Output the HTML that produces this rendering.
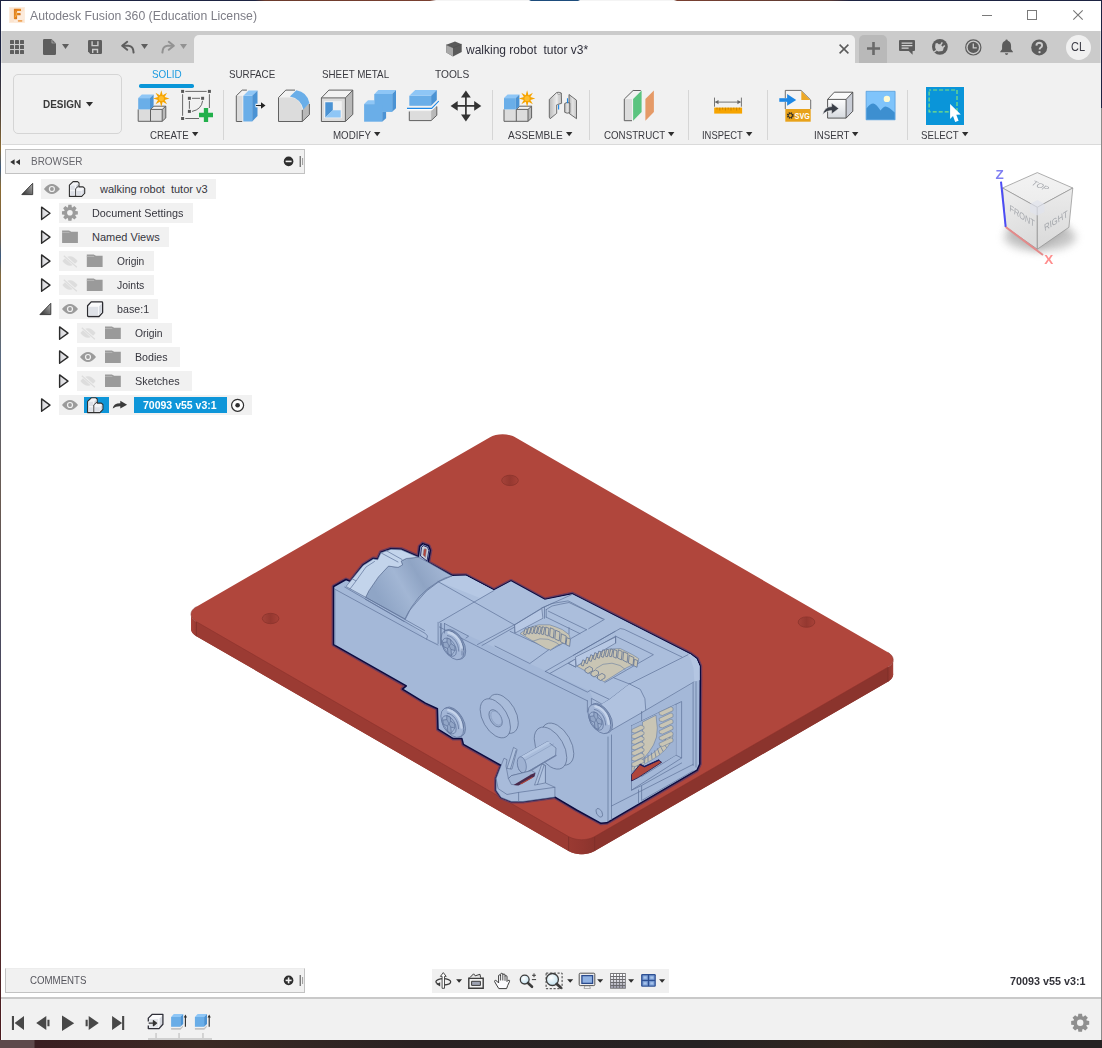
<!DOCTYPE html>
<html><head><meta charset="utf-8"><title>Autodesk Fusion 360</title>
<style>
*{box-sizing:border-box;margin:0;padding:0}
html,body{width:1102px;height:1048px;overflow:hidden;background:#fff;font-family:"Liberation Sans",sans-serif;}
#root{position:relative;width:1102px;height:1048px;background:#fff;overflow:hidden}
.a{position:absolute}
.t{position:absolute;white-space:pre;transform-origin:0 0}
svg{position:absolute;overflow:visible}

</style></head><body>
<div id="root">
<div class="a" style="left:0px;top:0px;width:1102px;height:1048px;background:#1d2342;"></div>
<div class="a" style="left:0px;top:60px;width:1px;height:980px;background:linear-gradient(#1d2342 0,#5a4a3a 6%,#8a6a32 9%,#3c5a80 11%,#8a6a32 13%,#7a6040 18%,#3a5a82 20%,#84683a 22%,#5a6a80 30%,#6a5a50 45%,#4a4a60 60%,#5a3a38 80%,#4a1a1e 100%);"></div>
<div class="a" style="left:1101px;top:108px;width:1px;height:932px;background:#8b8b8b;"></div>
<div class="a" style="left:0px;top:0px;width:1102px;height:1px;background:linear-gradient(90deg,#1d2342 0,#1d2342 255px,#6a3a2c 265px,#7a4030 430px,#f4f4f4 436px,#f4f4f4 529px,#1d4c7c 531px,#1d4c7c 578px,#f4f4f4 580px,#f4f4f4 674px,#7a4030 677px,#5a3a34 830px,#1d2342 850px,#1d2342 100%);"></div>
<div class="a" style="left:1px;top:1px;width:1100px;height:1039px;background:#fff;"></div>
<div class="a" style="left:0px;top:1040px;width:1102px;height:8px;background:linear-gradient(90deg,#5e4a4c 0,#5e4a4c 34px,#3a1f22 35px,#3b2a24 200px,#2a2122 420px,#262223 700px,#33261f 860px,#262223 1000px,#262223 100%);"></div>
<div class="a" style="left:1px;top:31px;width:1099px;height:32px;background:#cbcbcb;"></div>
<div class="a" style="left:1100px;top:31px;width:1px;height:32px;background:#dedede;"></div>
<div class="a" style="left:194px;top:35px;width:661px;height:28px;background:#f1f1f1;border-radius:5px 5px 0 0"></div>
<div class="a" style="left:859px;top:35px;width:28px;height:28px;background:#b9b9b9;border-radius:5px 5px 0 0"></div>
<div class="a" style="left:1px;top:63px;width:1100px;height:81px;background:#f1f1f1;"></div>
<div class="a" style="left:1px;top:144px;width:1100px;height:1px;background:#dadada;"></div>
<div class="a" style="left:13px;top:74px;width:109px;height:60px;background:#f1f1f1;border:1px solid #d5d5d5;border-radius:5px"></div>
<div class="a" style="left:139.3px;top:84.1px;width:54.4px;height:3.5px;background:#0a96d8;border-radius:1.75px"></div>
<svg style="left:192.4px;top:132px" width="7" height="5"><path d="M0 0h6.4L3.2 4.2z" fill="#2e2e2e"/></svg>
<svg style="left:374px;top:132px" width="7" height="5"><path d="M0 0h6.4L3.2 4.2z" fill="#2e2e2e"/></svg>
<svg style="left:566px;top:132px" width="7" height="5"><path d="M0 0h6.4L3.2 4.2z" fill="#2e2e2e"/></svg>
<svg style="left:668px;top:132px" width="7" height="5"><path d="M0 0h6.4L3.2 4.2z" fill="#2e2e2e"/></svg>
<svg style="left:746px;top:132px" width="7" height="5"><path d="M0 0h6.4L3.2 4.2z" fill="#2e2e2e"/></svg>
<svg style="left:852px;top:132px" width="7" height="5"><path d="M0 0h6.4L3.2 4.2z" fill="#2e2e2e"/></svg>
<svg style="left:962px;top:132px" width="7" height="5"><path d="M0 0h6.4L3.2 4.2z" fill="#2e2e2e"/></svg>
<svg style="left:86px;top:102px" width="8" height="5"><path d="M0 0h7L3.5 4.4z" fill="#2e2e2e"/></svg>
<div class="a" style="left:223px;top:90px;width:1px;height:50px;background:#d6d6d6;"></div>
<div class="a" style="left:492px;top:90px;width:1px;height:50px;background:#d6d6d6;"></div>
<div class="a" style="left:589px;top:90px;width:1px;height:50px;background:#d6d6d6;"></div>
<div class="a" style="left:688px;top:90px;width:1px;height:50px;background:#d6d6d6;"></div>
<div class="a" style="left:767px;top:90px;width:1px;height:50px;background:#d6d6d6;"></div>
<div class="a" style="left:907px;top:90px;width:1px;height:50px;background:#d6d6d6;"></div>
<div class="a" style="left:5px;top:149px;width:300px;height:25px;background:#f1f1f1;border:1px solid #c2c2c2"></div>
<div class="a" style="left:41px;top:179px;width:175px;height:20px;background:#f1f1f1;"></div>
<div class="a" style="left:59px;top:203px;width:134px;height:20px;background:#f1f1f1;"></div>
<div class="a" style="left:59px;top:227px;width:110px;height:20px;background:#f1f1f1;"></div>
<div class="a" style="left:59px;top:251px;width:95px;height:20px;background:#f1f1f1;"></div>
<div class="a" style="left:59px;top:275px;width:95px;height:20px;background:#f1f1f1;"></div>
<div class="a" style="left:59px;top:299px;width:99px;height:20px;background:#f1f1f1;"></div>
<div class="a" style="left:77px;top:323px;width:95px;height:20px;background:#f1f1f1;"></div>
<div class="a" style="left:77px;top:347px;width:103px;height:20px;background:#f1f1f1;"></div>
<div class="a" style="left:77px;top:371px;width:115px;height:20px;background:#f1f1f1;"></div>
<div class="a" style="left:59px;top:395px;width:193px;height:20px;background:#f1f1f1;"></div>
<div class="a" style="left:84px;top:397px;width:25px;height:16px;background:#0e96d9;"></div>
<div class="a" style="left:134px;top:397px;width:93px;height:16px;background:#0e96d9;"></div>
<div class="a" style="left:5px;top:968px;width:300px;height:25px;background:#f1f1f1;border:1px solid #c2c2c2;border-top-color:#ececec"></div>
<div class="a" style="left:432px;top:969px;width:237px;height:24px;background:#f0f0f0;"></div>
<div class="a" style="left:1px;top:997px;width:1100px;height:2px;background:#c9c9c9;"></div>
<div class="a" style="left:1px;top:999px;width:1100px;height:41px;background:#f1f1f1;"></div>
<div class="a" style="left:1px;top:31px;width:1px;height:32px;background:#dcdcdc;"></div>
<div class="a" style="left:1px;top:63px;width:1px;height:82px;background:#f8f8f8;"></div>
<div class="a" style="left:1px;top:999px;width:1px;height:41px;background:#fafafa;"></div>
<svg style="left:9px;top:7px" width="16" height="16"><defs><linearGradient id="fg" x1="0" y1="0" x2="1" y2="1"><stop offset="0" stop-color="#d9771c"/><stop offset="0.45" stop-color="#e88a24"/><stop offset="1" stop-color="#b4520c"/></linearGradient></defs><rect width="16" height="16" fill="#fdeee0"/><rect x="0.8" y="0.8" width="14.4" height="14.4" fill="#fbe4cf"/><path d="M5 9.5L15 4V12L8 16H5Z" fill="#fcebdc"/><path d="M4.9 2Q4.9 1.7 5.4 1.7H11.6Q12 1.7 12 2.2V3.4Q12 3.9 11.6 3.9H8.1V6.1H11.2Q11.6 6.1 11.6 6.5V7.9Q11.6 8.3 11.2 8.3H8.1V11.6Q8.1 12.3 7.4 12.3H5.6Q4.9 12.3 4.9 11.6Z" fill="url(#fg)"/><path d="M6.6 4.6Q7.6 5.2 7.4 7.4Q7 9 6.4 10" stroke="#f8b550" stroke-width="1" fill="none" opacity="0.85"/><rect x="8.9" y="13" width="4.3" height="1.8" rx="0.4" fill="#f0a55a"/></svg>
<svg style="left:982px;top:15px" width="10" height="1"><rect width="10" height="1" fill="#7a7a7a"/></svg>
<svg style="left:1027px;top:10px" width="10" height="10"><rect x="0.5" y="0.5" width="9" height="9" fill="none" stroke="#7a7a7a"/></svg>
<svg style="left:1073px;top:10px" width="10" height="10"><path d="M0.3 0.3L9.7 9.7M9.7 0.3L0.3 9.7" stroke="#777" stroke-width="1.1" fill="none"/></svg>
<svg style="left:10px;top:40px" width="14" height="14"><rect x="0" y="0" width="4" height="4" rx="0.6" fill="#5e5e5e"/><rect x="0" y="5" width="4" height="4" rx="0.6" fill="#5e5e5e"/><rect x="0" y="10" width="4" height="4" rx="0.6" fill="#5e5e5e"/><rect x="5" y="0" width="4" height="4" rx="0.6" fill="#5e5e5e"/><rect x="5" y="5" width="4" height="4" rx="0.6" fill="#5e5e5e"/><rect x="5" y="10" width="4" height="4" rx="0.6" fill="#5e5e5e"/><rect x="10" y="0" width="4" height="4" rx="0.6" fill="#5e5e5e"/><rect x="10" y="5" width="4" height="4" rx="0.6" fill="#5e5e5e"/><rect x="10" y="10" width="4" height="4" rx="0.6" fill="#5e5e5e"/></svg>
<svg style="left:43px;top:39px" width="13" height="16"><path d="M1.2 0H8.5L13 4.5V14.8Q13 16 11.8 16H1.2Q0 16 0 14.8V1.2Q0 0 1.2 0Z" fill="#5e5e5e"/><path d="M8.7 0.6V4.3H12.4Z" fill="#cbcbcb"/><path d="M9.3 0.9L12.2 3.8H9.3Z" fill="#5e5e5e"/></svg>
<svg style="left:62px;top:44px" width="7" height="5"><path d="M0 0H7L3.5 5Z" fill="#5e5e5e"/></svg>
<svg style="left:88px;top:40px" width="14" height="14"><path d="M1.2 0H12.8Q14 0 14 1.2V12.8Q14 14 12.8 14H2.4L0 11.6V1.2Q0 0 1.2 0Z" fill="#5e5e5e"/><path d="M3.4 1.2V6.3H10.6V1.2H9.2V4.9H4.8V1.2Z" fill="#cbcbcb"/><path d="M4 13V8.8H10.2V13H8.8V10.2H5.4V13Z" fill="#cbcbcb"/></svg>
<svg style="left:121px;top:41px" width="14" height="13"><path d="M6.2 0.8L1.2 4.8L6.2 8.8" fill="none" stroke="#5e5e5e" stroke-width="2" stroke-linejoin="round" stroke-linecap="round"/><path d="M1.8 4.8H7.5Q12.4 5.2 12.6 11.6" fill="none" stroke="#5e5e5e" stroke-width="2" stroke-linecap="round"/></svg>
<svg style="left:141px;top:44px" width="7" height="5"><path d="M0 0H7L3.5 5Z" fill="#5e5e5e"/></svg>
<svg style="left:161px;top:41px" width="14" height="13"><path d="M7.8 0.8L12.8 4.8L7.8 8.8" fill="none" stroke="#929292" stroke-width="2" stroke-linejoin="round" stroke-linecap="round"/><path d="M12.2 4.8H6.5Q1.6 5.2 1.4 11.6" fill="none" stroke="#929292" stroke-width="2" stroke-linecap="round"/></svg>
<svg style="left:180px;top:44px" width="7" height="5"><path d="M0 0H7L3.5 5Z" fill="#929292"/></svg>
<svg style="left:446px;top:41px" width="16" height="16"><path d="M0.3 3.8L9 0.6L15.7 3.2V11L7 15.6L0.3 11.6Z" fill="#5a5a5a"/><path d="M0.3 3.8L7 6.8V15.6L0.3 11.6Z" fill="#a9a9a9"/><path d="M0.3 3.8L7 6.8L15.7 3.2" fill="none" stroke="#4a4a4a" stroke-width="0.5"/></svg>
<svg style="left:839px;top:44px" width="10" height="10"><path d="M0.6 0.6L9.4 9.4M9.4 0.6L0.6 9.4" stroke="#5a5a5a" stroke-width="1.5" fill="none"/></svg>
<svg style="left:867px;top:42px" width="13" height="13"><path d="M6.5 0V13M0 6.5H13" stroke="#6a6a6a" stroke-width="2.6" fill="none"/></svg>
<svg style="left:899px;top:40px" width="18" height="15"><path d="M1 0H15Q16 0 16 1V10Q16 11 15 11H13.6V14.8L9.8 11H1Q0 11 0 10V1Q0 0 1 0Z" fill="#5c5c5c"/><path d="M2.6 3H13.4M2.6 5.5H13.4M2.6 8H9.6" stroke="#d4d4d4" stroke-width="1.25"/></svg>
<svg style="left:931px;top:38px" width="18" height="18"><g transform="translate(8.9 8.8)"><circle r="7.9" fill="#5c5c5c"/><path d="M-4.4 -3.2L-2.6 -3.8L-1.2 -2.6L0.2 -2.6L3.6 0.6V2.2L2.6 4.2L-1.6 4.6L-3.8 3.4L-4.8 0.4Z" fill="#cbcbcb"/><path d="M0.5 -1.5L2.4 -4.4M3 0.8L4.9 -1.4" stroke="#cbcbcb" stroke-width="1.5" fill="none"/><path d="M-3.4 3.4L-7.2 6.2" stroke="#cbcbcb" stroke-width="1.3" fill="none"/></g></svg>
<svg style="left:965px;top:39px" width="17" height="17"><circle cx="8.3" cy="8.4" r="7.6" fill="none" stroke="#5c5c5c" stroke-width="1.2"/><circle cx="8.3" cy="8.4" r="5.6" fill="#5c5c5c"/><path d="M8.3 4.6V8.8H11.8" fill="none" stroke="#cbcbcb" stroke-width="1.3"/></svg>
<svg style="left:999.6px;top:38.6px" width="15" height="18"><g transform="scale(0.9 0.93)"><path d="M7.3 0.6Q8.6 0.6 8.7 2Q12.2 3.2 12.3 7.5V11L14.4 13.6V14.2H0.2V13.6L2.3 11V7.5Q2.4 3.2 5.9 2Q6 0.6 7.3 0.6Z" fill="#5c5c5c"/><path d="M5.4 15.4H9.2Q8.9 17.2 7.3 17.2Q5.7 17.2 5.4 15.4Z" fill="#5c5c5c"/></g></svg>
<svg style="left:1031px;top:39px" width="17" height="17"><circle cx="8.2" cy="8.4" r="8" fill="#5c5c5c"/><path d="M5.4 6.6Q5.5 3.8 8.3 3.8Q11.1 3.9 11.1 6.4Q11.1 7.9 9.6 8.7Q8.6 9.3 8.6 10.6" fill="none" stroke="#cbcbcb" stroke-width="1.9"/><circle cx="8.5" cy="13.1" r="1.2" fill="#cbcbcb"/></svg>
<div class="a" style="left:1065.5px;top:34.5px;width:25px;height:25px;border-radius:50%;background:#f0f0f0"></div>
<svg style="left:0;top:0" width="1102" height="145" viewBox="0 0 1102 145"><path d="M138.2 109.4H162.2V121.3H138.2Z" fill="#dcdcdc" /><path d="M150.5 109.4L154.0 106.2H165.79999999999998L162.2 109.4Z" fill="#f2f2f2" /><path d="M162.2 109.4L165.79999999999998 106.2V118L162.2 121.3Z" fill="#b9b9b9" /><path d="M138.2 109.4V121.3H162.2L165.79999999999998 118V106.2H154.0L150.5 109.4M150.5 109.4V121.3M150.5 109.4H162.2V121.3M162.2 109.4L165.79999999999998 106.2" fill="none" stroke="#616161" stroke-width="1" /><path d="M138.2 98.1H150.0V109.4H138.2Z" fill="#6aaee8" /><path d="M138.2 98.1L141.79999999999998 94.4H153.6L150.0 98.1Z" fill="#8ec6f6" /><path d="M150.0 98.1L153.6 94.4V106.2L150.0 109.4Z" fill="#4b93d4" /><path d="M161.3 90.3L162.7 95.2L167.1 92.7L164.6 97.1L169.5 98.5L164.6 99.9L167.1 104.3L162.7 101.8L161.3 106.7L159.9 101.8L155.5 104.3L158.0 99.9L153.1 98.5L158.0 97.1L155.5 92.7L159.9 95.2Z" fill="#f6a400" /><circle cx="161.29999999999998" cy="98.5" r="2.6" fill="#ffbe2e"/><path d="M161.3 90.3L162.7 95.2L167.1 92.7L164.6 97.1L169.5 98.5L164.6 99.9L167.1 104.3L162.7 101.8L161.3 106.7L159.9 101.8L155.5 104.3L158.0 99.9L153.1 98.5L158.0 97.1L155.5 92.7L159.9 95.2Z" fill="none" stroke="#f1f1f1" stroke-width="0.6" opacity="0.0"/><path d="M504 109.4H528V121.3H504Z" fill="#dcdcdc" /><path d="M516.3 109.4L519.8 106.2H531.6L528 109.4Z" fill="#f2f2f2" /><path d="M528 109.4L531.6 106.2V118L528 121.3Z" fill="#b9b9b9" /><path d="M504 109.4V121.3H528L531.6 118V106.2H519.8L516.3 109.4M516.3 109.4V121.3M516.3 109.4H528V121.3M528 109.4L531.6 106.2" fill="none" stroke="#616161" stroke-width="1" /><path d="M504 98.1H515.8V109.4H504Z" fill="#6aaee8" /><path d="M504 98.1L507.6 94.4H519.4L515.8 98.1Z" fill="#8ec6f6" /><path d="M515.8 98.1L519.4 94.4V106.2L515.8 109.4Z" fill="#4b93d4" /><path d="M527.1 90.3L528.5 95.2L532.9 92.7L530.4 97.1L535.3 98.5L530.4 99.9L532.9 104.3L528.5 101.8L527.1 106.7L525.7 101.8L521.3 104.3L523.8 99.9L518.9 98.5L523.8 97.1L521.3 92.7L525.7 95.2Z" fill="#f6a400" /><circle cx="527.1" cy="98.5" r="2.6" fill="#ffbe2e"/><path d="M527.1 90.3L528.5 95.2L532.9 92.7L530.4 97.1L535.3 98.5L530.4 99.9L532.9 104.3L528.5 101.8L527.1 106.7L525.7 101.8L521.3 104.3L523.8 99.9L518.9 98.5L523.8 97.1L521.3 92.7L525.7 95.2Z" fill="none" stroke="#f1f1f1" stroke-width="0.6" opacity="0.0"/><rect x="181.1" y="89.9" width="3" height="3" fill="#585858"/><rect x="207.9" y="89.9" width="3" height="3" fill="#585858"/><rect x="181.1" y="117.0" width="3" height="3" fill="#585858"/><rect x="187.9" y="96.8" width="3" height="3" fill="#585858"/><rect x="201.1" y="96.8" width="3" height="3" fill="#585858"/><rect x="187.9" y="109.9" width="3" height="3" fill="#585858"/><path d="M185.3 91.4H206.7M182.6 94.2V115.8M185.3 118.5H199M209.4 94.2V108" fill="none" stroke="#585858" stroke-width="0.9" /><path d="M192 98.3H200M189.4 101V108.8M202.6 100.8Q201.5 109.5 192 111.4" fill="none" stroke="#585858" stroke-width="0.9" /><path d="M206 108V122M199 115H213" fill="none" stroke="#22b04b" stroke-width="4.3" /><path d="M236.3 95.8L242.2 90.1H246.9L243 95.8Z" fill="#f2f2f2" /><path d="M236.3 95.8H242.5V121.5H236.3Z" fill="#dcdcdc" /><path d="M242.2 121.5H236.3V95.8L242.2 90.1H246.9" fill="none" stroke="#616161" stroke-width="1" /><path d="M243.3 95.8H252.2V121.5H243.3Z" fill="#6aaee8" /><path d="M243.3 95.8L248.6 90.5H257.5L252.2 95.8Z" fill="#8ec6f6" /><path d="M252.2 95.8L257.5 90.5V115.9L252.2 121.5Z" fill="#4b93d4" /><path d="M255.5 103.7H258V107.3H255.5Z" fill="#fff" /><path d="M256 105.5H262" fill="none" stroke="#222" stroke-width="1.1" /><path d="M261 102.3L265.5 105.5L261 108.7Z" fill="#222" /><path d="M278.5 97.6L285.8 90.1H296.4L289.9 97.6Z" fill="#f2f2f2" /><path d="M278.5 97.6H291.7Q300.5 99 302.3 109.4V121.5H278.5Z" fill="#dcdcdc" /><path d="M302.3 109.4L309.4 102.9V114.7L302.3 121.5Z" fill="#b9b9b9" /><path d="M289.9 96.4L296.4 90.3Q307 92 309.4 102.9L303.3 109.6Q301 98.5 289.9 96.4Z" fill="#6aaee8" /><path d="M285.8 90.1H295M278.5 97.6L285.8 90.1M278.5 97.6V121.5H302.3L309.4 114.7V104M302.3 121.5V110" fill="none" stroke="#616161" stroke-width="1" /><path d="M321.4 97.9L328.9 90.1H352.8L345.4 97.9Z" fill="#f2f2f2" /><path d="M345.4 97.9L352.8 90.1V114.4L345.4 121.5Z" fill="#b9b9b9" /><path d="M321.4 97.9H345.4V121.5H321.4Z" fill="#dcdcdc" /><path d="M324.1 101.1H341.8V118.2H324.1Z" fill="#f1f1f1" /><path d="M325.3 102.3H332.8V110.2L325.3 117.6Z" fill="#4b93d4" /><path d="M325.3 117.6L332.8 110.2H340.7V117.6Z" fill="#8ec6f6" /><path d="M321.4 97.9L328.9 90.1H352.8V114.4L345.4 121.5H321.4ZM321.4 97.9H345.4V121.5M345.4 97.9L352.8 90.1" fill="none" stroke="#616161" stroke-width="1" /><path d="M374.5 94H392.2V111.7H374.5Z" fill="#6aaee8" /><path d="M374.5 94L378.3 90.1H396L392.2 94Z" fill="#8ec6f6" /><path d="M392.2 94L396 90.1V108.2L392.2 111.7Z" fill="#4b93d4" /><path d="M364.1 104.1H382.2V121.7H364.1Z" fill="#6aaee8" /><path d="M364.1 104.1L368 100.3H374.5V104.1Z" fill="#8ec6f6" /><path d="M382.2 111.7H386.1V118.2L382.2 121.7Z" fill="#4b93d4" /><path d="M374.5 104.1H382.2V111.7H392.2V94H374.5Z" fill="#6aaee8" /><path d="M409.3 95.8H431.1V105.8H409.3Z" fill="#6aaee8" /><path d="M409.3 95.8L415.2 90.1H436.8L431.1 95.8Z" fill="#8ec6f6" /><path d="M431.1 95.8L436.8 90.1V99.9L431.1 105.8Z" fill="#4b93d4" /><path d="M409.3 111.1H431.1V120.6H409.3Z" fill="#dcdcdc" /><path d="M431.1 111.1L436.8 105.8V115.3L431.1 120.6Z" fill="#b9b9b9" /><path d="M409.3 111.5V120.6H431.1L436.8 115.3V106.5" fill="none" stroke="#616161" stroke-width="1" /><path d="M407 109.5H431.9L438.9 102.2" fill="none" stroke="#fff" stroke-width="1.2" /><path d="M407 108.4H431.7L438.8 101.1" fill="none" stroke="#1e88e5" stroke-width="1.1" /><path d="M465.9 95V117M455 105.9H477" fill="none" stroke="#333" stroke-width="1.7" /><path d="M465.9 90.5L470.8 97.6H461Z" fill="#333" /><path d="M465.9 121.5L470.8 114.4H461Z" fill="#333" /><path d="M450.6 105.9L457.7 101V110.8Z" fill="#333" /><path d="M481.3 105.9L474.2 101V110.8Z" fill="#333" /><linearGradient id="jg" x1="0" x2="1"><stop offset="0" stop-color="#b8b8b8"/><stop offset="0.5" stop-color="#e4e4e4"/><stop offset="1" stop-color="#c4c4c4"/></linearGradient><path d="M549.3 99.4L556.7 92.5Q559 91.8 561.3 93L561.6 103.3L556.7 104.8V113.3L550.2 118.7L549.3 117.2Z" fill="url(#jg)" stroke="#616161" stroke-width="0.9" /><path d="M556.9 93.2V104.5" fill="none" stroke="#f4f4f4" stroke-width="1" /><ellipse cx="558.9" cy="93.4" rx="1.7" ry="0.9" fill="#f4f4f4" stroke="#616161" stroke-width="0.5"/><path d="M569 94.5L576.5 100.2V118.7L569 113.3Z" fill="url(#jg)" stroke="#616161" stroke-width="0.9" /><path d="M564.7 103.5Q567 101.5 569.8 103V112.5Q567 114 564.7 112.3Z" fill="url(#jg)" stroke="#616161" stroke-width="0.9" /><path d="M558.6 104.8V109.5M567.5 98.2V103.3" fill="none" stroke="#1e88e5" stroke-width="1.1" /><path d="M624.3 99.1H632V120.7H624.3Z" fill="#dcdcdc" /><path d="M624.3 99.1L633.1 90.5H640.8L632 99.1Z" fill="#f2f2f2" /><path d="M632 120.7H624.3V99.1L633.1 90.5H640.8" fill="none" stroke="#616161" stroke-width="1" /><path d="M633.1 99.1L641.6 90.5V112.1L633.1 120.7Z" fill="#5bc47f" /><path d="M645.4 99.1L653.9 90.5V112.1L645.4 120.7Z" fill="#e59a67" /><path d="M714.5 97.6V106.7M741.4 97.6V106.7M715.5 102.1H740.4" fill="none" stroke="#666" stroke-width="0.9" /><path d="M714.9 102.1L718.5 100V104.2ZM741 102.1L737.4 100V104.2Z" fill="#666" /><path d="M714.2 107.6H742.1V113.6H714.2Z" fill="#f6a400" /><path d="M717 107.6V109.5M719.8 107.6V110.5M722.6 107.6V109.5M725.4 107.6V110.5M728.2 107.6V109.5M731 107.6V110.5M733.8 107.6V109.5M736.6 107.6V110.5M739.4 107.6V109.5" fill="none" stroke="#b87700" stroke-width="0.7" /><path d="M785.3 109V90.4H801L810.7 100V109" fill="#f4f4f4" stroke="#616161" stroke-width="0.9" /><path d="M801.3 90.9L810.3 100H801.3Z" fill="#eda826" /><path d="M785.3 109H810.7V121.7H785.3Z" fill="#e8a21a" /><path d="M778.5 103.5V96.5H782.5V98.2H787.5V101.8H782.5V103.5Z" fill="#f1f1f1" /><path d="M779.3 98.2H788V101.8H779.3Z" fill="#1e88e5" /><path d="M787.1 94L796.2 100L787.1 105.8Z" fill="#1e88e5" /><circle cx="790.3" cy="115.5" r="2.6" fill="none" stroke="#2a2a2a" stroke-width="1.5" stroke-dasharray="1.3 0.75"/><circle cx="790.3" cy="115.5" r="2" fill="none" stroke="#2a2a2a" stroke-width="0.8"/><text x="794.6" y="119.3" font-family="Liberation Sans" font-weight="bold" font-size="9.2" fill="#fff" textLength="15.2" lengthAdjust="spacingAndGlyphs">SVG</text><linearGradient id="dg" x1="0" y1="0" x2="0" y2="1"><stop offset="0" stop-color="#fdfdfd"/><stop offset="1" stop-color="#d6dadf"/></linearGradient><path d="M827.6 99.4H846.1V118.1H827.6Z" fill="url(#dg)" /><path d="M827.6 99.4L834.3 92.2H852.8L846.1 99.4Z" fill="#fafafa" /><path d="M846.1 99.4L852.8 92.2V111.2L846.1 118.1Z" fill="#c9cdd6" /><path d="M827.6 99.4L834.3 92.2H852.8V111.2L846.1 118.1H827.6ZM827.6 99.4H846.1V118.1M846.1 99.4L852.8 92.2" fill="none" stroke="#484848" stroke-width="0.9" /><path d="M822.6 114.6Q824.5 106.8 831.6 106.6V103.1L838.8 108.5L831.6 113.9V110.6Q826.5 110.4 822.6 114.6Z" fill="#3a3f48" stroke="#f1f1f1" stroke-width="0.5" /><path d="M866.1 91.3H895.1V119.8H866.1Z" fill="#7fc4fb" stroke="#4a97d8" stroke-width="0.7" /><path d="M866.5 108.5Q870 103.5 873.2 103.5Q876 103.5 880.5 110.5Q883.5 106.5 885.5 106.5Q888.5 106.5 894.7 112.5V119.4H866.5Z" fill="#3d8fd0" /><circle cx="886.9" cy="98.9" r="3.2" fill="#fffbd2"/><path d="M925.5 86.5H964.5V125.5H925.5Z" fill="#fbf3ee" /><path d="M926 87H964V125H926Z" fill="#0a95d9" /><path d="M929.1 90H957V111.8H929.1Z" fill="none" stroke="#7fe27f" stroke-width="1.2" stroke-dasharray="4 2" stroke-dashoffset="2"/><path d="M950.1 104.1V118.9L953 116L955.2 121.9L958.6 120.7L956.3 114.8L960.8 114.6Z" fill="#fff" /></svg>
<svg style="left:0;top:0" width="320" height="1000" viewBox="0 0 320 1000"><linearGradient id="tg" x1="0" y1="1" x2="1" y2="0"><stop offset="0" stop-color="#2e2e2e"/><stop offset="0.45" stop-color="#6a6a6a"/><stop offset="1" stop-color="#b4b4b4"/></linearGradient><linearGradient id="tg2" x1="0" x2="1"><stop offset="0" stop-color="#d4d4d8"/><stop offset="1" stop-color="#f4f4f6"/></linearGradient><path d="M10.2 162.1L14.6 159.3V164.9ZM15.6 162.1L20 159.3V164.9Z" fill="#333" /><circle cx="288.6" cy="161.4" r="4.8" fill="#2c2c2c"/><rect x="285.6" y="160.6" width="6" height="1.6" fill="#f1f1f1"/><path d="M300.2 156V167" fill="none" stroke="#444" stroke-width="1" /><path d="M302.6 158V165" fill="none" stroke="#9a9a9a" stroke-width="1" /><circle cx="288.6" cy="980.4" r="4.8" fill="#2c2c2c"/><rect x="285.6" y="979.6" width="6" height="1.6" fill="#f1f1f1"/><rect x="287.8" y="977.4" width="1.6" height="6" fill="#f1f1f1"/><path d="M300.2 975V986" fill="none" stroke="#444" stroke-width="1" /><path d="M302.6 977V984" fill="none" stroke="#9a9a9a" stroke-width="1" /><path d="M21.800000000000004 194.6L32.7 183.29999999999998V194.6Z" fill="url(#tg)" stroke="#333" stroke-width="0.9" stroke-linejoin="round"/><path d="M43.9 189Q47.9 184 51.9 184Q55.9 184 59.9 189Q55.9 194 51.9 194Q47.9 194 43.9 189Z" fill="#9b9b9b" /><circle cx="51.9" cy="189" r="3.1" fill="#f1f1f1"/><circle cx="51.9" cy="189" r="1.9" fill="#9b9b9b"/><path d="M69.4 185.1L73.1 181.6H77.6L79 182.8V186.9H83.1L84.7 188.3V193.2L81.7 196.4H69.4Z" fill="#f4f5f8" stroke="#2f2f2f" stroke-width="1.1" stroke-linejoin="round"/><path d="M70.4 185.6H74.8V189.8H70.4Z" fill="#dde0e7" /><path d="M70.4 191.2H74.6V195.4H70.4Z" fill="#dde0e7" /><path d="M76.7 191H81.6V195.4H76.7Z" fill="#dde0e7" /><path d="M76.2 185.2L78.3 183.4V186.9L76.2 189Z" fill="#d0d4dc" /><path d="M82.4 190.4L84 188.9V192.9L82.4 194.7Z" fill="#d0d4dc" /><path d="M75.6 196V188.7L79 185.6" fill="none" stroke="#2f2f2f" stroke-width="0.9" /><path d="M41.599999999999994 207.1L50.0 213.29999999999998L41.599999999999994 219.5Z" fill="url(#tg2)" stroke="#2c2c2c" stroke-width="1.4" stroke-linejoin="round"/><path d="M77.84 211.19L77.84 214.41L75.48 214.71L75.20 215.39L76.65 217.28L74.38 219.55L72.49 218.10L71.81 218.38L71.51 220.74L68.29 220.74L67.99 218.38L67.31 218.10L65.42 219.55L63.15 217.28L64.60 215.39L64.32 214.71L61.96 214.41L61.96 211.19L64.32 210.89L64.60 210.21L63.15 208.32L65.42 206.05L67.31 207.50L67.99 207.22L68.29 204.86L71.51 204.86L71.81 207.22L72.49 207.50L74.38 206.05L76.65 208.32L75.20 210.21L75.48 210.89Z" fill="#9b9b9b" /><circle cx="69.9" cy="212.8" r="2.8" fill="#f1f1f1"/><path d="M41.599999999999994 230.9L50.0 237.1L41.599999999999994 243.3Z" fill="url(#tg2)" stroke="#2c2c2c" stroke-width="1.4" stroke-linejoin="round"/><path d="M62.1 230.6H69.0L71.3 231.79999999999998H77.9V243.1H62.1Z" fill="#9a9a9a" /><path d="M62.1 232.4H69.5" fill="none" stroke="#bdbdbd" stroke-width="0.8" /><path d="M41.599999999999994 254.9L50.0 261.1L41.599999999999994 267.3Z" fill="url(#tg2)" stroke="#2c2c2c" stroke-width="1.4" stroke-linejoin="round"/><path d="M62.4 261Q66 256.2 70 256.2Q74 256.2 77.6 261Q74 265.8 70 265.8Q66 265.8 62.4 261Z" fill="#dddddd" /><path d="M63.5 255L76.5 267" fill="none" stroke="#f1f1f1" stroke-width="2.6" /><path d="M63.8 255.8L76.8 267.2" fill="none" stroke="#dddddd" stroke-width="1.2" /><path d="M86.8 254.6H93.7L96.0 255.79999999999998H102.6V267.1H86.8Z" fill="#9a9a9a" /><path d="M86.8 256.4H94.2" fill="none" stroke="#bdbdbd" stroke-width="0.8" /><path d="M41.599999999999994 278.9L50.0 285.1L41.599999999999994 291.3Z" fill="url(#tg2)" stroke="#2c2c2c" stroke-width="1.4" stroke-linejoin="round"/><path d="M62.4 285Q66 280.2 70 280.2Q74 280.2 77.6 285Q74 289.8 70 289.8Q66 289.8 62.4 285Z" fill="#dddddd" /><path d="M63.5 279L76.5 291" fill="none" stroke="#f1f1f1" stroke-width="2.6" /><path d="M63.8 279.8L76.8 291.2" fill="none" stroke="#dddddd" stroke-width="1.2" /><path d="M86.8 278.6H93.7L96.0 279.8H102.6V291.1H86.8Z" fill="#9a9a9a" /><path d="M86.8 280.40000000000003H94.2" fill="none" stroke="#bdbdbd" stroke-width="0.8" /><path d="M39.9 314.6L50.8 303.3V314.6Z" fill="url(#tg)" stroke="#333" stroke-width="0.9" stroke-linejoin="round"/><path d="M62 309Q66 304 70 304Q74 304 78 309Q74 314 70 314Q66 314 62 309Z" fill="#9b9b9b" /><circle cx="70" cy="309" r="3.1" fill="#f1f1f1"/><circle cx="70" cy="309" r="1.9" fill="#9b9b9b"/><path d="M87.6 305.8L91.2 301.9H101.8Q102.6 301.9 102.6 302.7V312.59999999999997L99 316.5H88.4Q87.6 316.5 87.6 315.7Z" fill="#fafbfc" stroke="#2b2b30" stroke-width="1.3" stroke-linejoin="round"/><path d="M88.6 306.8H98.2V315.4H88.6Z" fill="#dfe2e8" /><path d="M99.2 306.2L101.8 303.4V312.0L99.2 314.8Z" fill="#d3d7df" /><path d="M59.599999999999994 326.9L68.0 333.1L59.599999999999994 339.3Z" fill="url(#tg2)" stroke="#2c2c2c" stroke-width="1.4" stroke-linejoin="round"/><path d="M80.4 333Q84 328.2 88 328.2Q92 328.2 95.6 333Q92 337.8 88 337.8Q84 337.8 80.4 333Z" fill="#dddddd" /><path d="M81.5 327L94.5 339" fill="none" stroke="#f1f1f1" stroke-width="2.6" /><path d="M81.8 327.8L94.8 339.2" fill="none" stroke="#dddddd" stroke-width="1.2" /><path d="M105 326.6H111.9L114.2 327.8H120.8V339.1H105Z" fill="#9a9a9a" /><path d="M105 328.40000000000003H112.4" fill="none" stroke="#bdbdbd" stroke-width="0.8" /><path d="M59.599999999999994 350.9L68.0 357.1L59.599999999999994 363.3Z" fill="url(#tg2)" stroke="#2c2c2c" stroke-width="1.4" stroke-linejoin="round"/><path d="M80 357Q84 352 88 352Q92 352 96 357Q92 362 88 362Q84 362 80 357Z" fill="#9b9b9b" /><circle cx="88" cy="357" r="3.1" fill="#f1f1f1"/><circle cx="88" cy="357" r="1.9" fill="#9b9b9b"/><path d="M105 350.6H111.9L114.2 351.8H120.8V363.1H105Z" fill="#9a9a9a" /><path d="M105 352.40000000000003H112.4" fill="none" stroke="#bdbdbd" stroke-width="0.8" /><path d="M59.599999999999994 374.9L68.0 381.1L59.599999999999994 387.3Z" fill="url(#tg2)" stroke="#2c2c2c" stroke-width="1.4" stroke-linejoin="round"/><path d="M80.4 381Q84 376.2 88 376.2Q92 376.2 95.6 381Q92 385.8 88 385.8Q84 385.8 80.4 381Z" fill="#dddddd" /><path d="M81.5 375L94.5 387" fill="none" stroke="#f1f1f1" stroke-width="2.6" /><path d="M81.8 375.8L94.8 387.2" fill="none" stroke="#dddddd" stroke-width="1.2" /><path d="M105 374.6H111.9L114.2 375.8H120.8V387.1H105Z" fill="#9a9a9a" /><path d="M105 376.40000000000003H112.4" fill="none" stroke="#bdbdbd" stroke-width="0.8" /><path d="M41.599999999999994 398.9L50.0 405.1L41.599999999999994 411.3Z" fill="url(#tg2)" stroke="#2c2c2c" stroke-width="1.4" stroke-linejoin="round"/><path d="M62 405Q66 400 70 400Q74 400 78 405Q74 410 70 410Q66 410 62 405Z" fill="#9b9b9b" /><circle cx="70" cy="405" r="3.1" fill="#f1f1f1"/><circle cx="70" cy="405" r="1.9" fill="#9b9b9b"/><path d="M87.60000000000001 401.3L91.3 397.8H95.8L97.2 399.0V403.09999999999997H101.3L102.9 404.5V409.4L99.9 412.59999999999997H87.60000000000001Z" fill="#f2f3f6" stroke="#2f2f2f" stroke-width="1.1" stroke-linejoin="round"/><path d="M88.60000000000001 401.8H93.0V406.0H88.60000000000001Z" fill="#dde0e7" /><path d="M88.60000000000001 407.4H92.8V411.59999999999997H88.60000000000001Z" fill="#dde0e7" /><path d="M94.9 407.2H99.8V411.59999999999997H94.9Z" fill="#dde0e7" /><path d="M94.4 401.4L96.5 399.59999999999997V403.09999999999997L94.4 405.2Z" fill="#d0d4dc" /><path d="M100.60000000000001 406.59999999999997L102.2 405.09999999999997V409.09999999999997L100.60000000000001 410.9Z" fill="#d0d4dc" /><path d="M93.8 412.2V404.9L97.2 401.8" fill="none" stroke="#2f2f2f" stroke-width="0.9" /><path d="M112.7 408.4Q113.5 403.3 120.3 403.2V400.8L127.1 404.7L120.3 408.4V406.2Q116 406 112.7 408.4Z" fill="#3a3a3a" /><circle cx="237.6" cy="405.3" r="6" fill="#fff" stroke="#2f2f2f" stroke-width="1.2"/><circle cx="237.6" cy="405.3" r="2.3" fill="#2f2f2f"/></svg>
<svg style="left:0;top:0" width="1102" height="1048" viewBox="0 0 1102 1048"><ellipse cx="443.3" cy="981.8" rx="7.4" ry="3.2" fill="none" stroke="#3c3c3c" stroke-width="1.3" stroke-dasharray="34 6" stroke-dashoffset="-14"/><path d="M443.3 972.6L446.2 976.4H444.5V988.3H442.1V976.4H440.4Z" fill="#fff" stroke="#3c3c3c" stroke-width="0.9" stroke-linejoin="round"/><path d="M436.4 984.3L440.2 982.2V986.6Z" fill="#3c3c3c" /><path d="M456.1 979.2H462.1L459.1 982.8Z" fill="#2e2e2e" /><path d="M468.8 978.2H483.2V988.2H468.8Z" fill="#f1f1f1" stroke="#3c3c3c" stroke-width="1.4" /><path d="M471.6 981.3H480.4V985.4H471.6Z" fill="#9ea3b2" stroke="#3c3c3c" stroke-width="1" /><path d="M469.9 977.6L473.6 973.8L475.2 975.8L480 974.3L480.6 977.6" fill="#e4e4e4" stroke="#3c3c3c" stroke-width="1" stroke-linejoin="round"/><path d="M498.8 988.6Q496.5 985 494.6 981.6Q494.4 980.3 495.6 980.4Q497 980.8 498.6 983V976Q498.6 974.8 499.6 974.8Q500.6 974.8 500.6 976V974.4Q500.6 973.3 501.7 973.3Q502.8 973.3 502.8 974.4V975Q502.8 974 503.9 974Q505 974 505 975V976.4Q505 975.6 506 975.6Q507 975.6 507 976.8V981.5Q508 980 509.2 980.2Q510 980.6 509.4 981.8Q507.5 985.5 506.6 988.6Z" fill="#fbfbfd" stroke="#3c3c3c" stroke-width="1" stroke-linejoin="round"/><path d="M500.6 976V980.5M502.8 975V980.5M505 976.4V980.8" fill="none" stroke="#3c3c3c" stroke-width="0.9" /><radialGradient id="lens" cx="0.4" cy="0.35" r="0.7"><stop offset="0" stop-color="#fff"/><stop offset="1" stop-color="#bfe0ee"/></radialGradient><circle cx="524.7" cy="979.6" r="4.4" fill="url(#lens)" stroke="#3c3c3c" stroke-width="1.3"/><path d="M528 983L532 986.8" fill="none" stroke="#3c3c3c" stroke-width="2.6" stroke-linecap="round"/><path d="M534 973.4V977.2M532.1 975.3H535.9M531.9 979.6H536.1" fill="none" stroke="#3c3c3c" stroke-width="1" /><path d="M546.1 973.1H562.1V988.7H546.1Z" fill="none" stroke="#3c3c3c" stroke-width="1" stroke-dasharray="2.2 1.6"/><circle cx="552.4" cy="979.5" r="6" fill="url(#lens)" stroke="#3c3c3c" stroke-width="1.3"/><path d="M556.8 984L560.6 987.6" fill="none" stroke="#3c3c3c" stroke-width="2.8" stroke-linecap="round"/><path d="M567.2 979.2H573.2L570.2 982.8Z" fill="#2e2e2e" /><path d="M580.2 973.2H593.8Q594.8 973.2 594.8 974.2V984.6Q594.8 985.6 593.8 985.6H580.2Q579.2 985.6 579.2 984.6V974.2Q579.2 973.2 580.2 973.2Z" fill="#ececec" stroke="#555" stroke-width="1" /><path d="M581.9 975.7H592.6V983.3H581.9Z" fill="#8fb1e2" stroke="#2a4a8c" stroke-width="1.3" /><path d="M584.8 986H589.6L590.4 988.4H584Z" fill="#fafafa" stroke="#777" stroke-width="0.6" /><path d="M597.2 979.2H603.2L600.2 982.8Z" fill="#2e2e2e" /><linearGradient id="gg" x1="0" y1="0" x2="0" y2="1"><stop offset="0" stop-color="#ffffff"/><stop offset="0.5" stop-color="#d8d8de"/><stop offset="1" stop-color="#9696a4"/></linearGradient><path d="M610.1 973.1H625.8V988.7H610.1Z" fill="#6a6a6e" /><path d="M610.9 973.9h2.2v2.2h-2.2ZM610.9 976.9h2.2v2.2h-2.2ZM610.9 979.9h2.2v2.2h-2.2ZM610.9 982.9h2.2v2.2h-2.2ZM610.9 985.9h2.2v2.2h-2.2ZM613.9 973.9h2.2v2.2h-2.2ZM613.9 976.9h2.2v2.2h-2.2ZM613.9 979.9h2.2v2.2h-2.2ZM613.9 982.9h2.2v2.2h-2.2ZM613.9 985.9h2.2v2.2h-2.2ZM616.9 973.9h2.2v2.2h-2.2ZM616.9 976.9h2.2v2.2h-2.2ZM616.9 979.9h2.2v2.2h-2.2ZM616.9 982.9h2.2v2.2h-2.2ZM616.9 985.9h2.2v2.2h-2.2ZM619.9 973.9h2.2v2.2h-2.2ZM619.9 976.9h2.2v2.2h-2.2ZM619.9 979.9h2.2v2.2h-2.2ZM619.9 982.9h2.2v2.2h-2.2ZM619.9 985.9h2.2v2.2h-2.2ZM622.9 973.9h2.2v2.2h-2.2ZM622.9 976.9h2.2v2.2h-2.2ZM622.9 979.9h2.2v2.2h-2.2ZM622.9 982.9h2.2v2.2h-2.2ZM622.9 985.9h2.2v2.2h-2.2Z" fill="url(#gg)" /><path d="M628.1 979.2H634.1L631.1 982.8Z" fill="#2e2e2e" /><path d="M642.3 974H654.6Q655.8 974 655.8 975.2V985.6Q655.8 986.8 654.6 986.8H642.3Q641.1 986.8 641.1 985.6V975.2Q641.1 974 642.3 974Z" fill="#2d4f92" /><path d="M642.5 975.3H647.8V979.8H642.5Z" fill="#7fa3da" /><path d="M643.7 976.5H646.6V978.5999999999999H643.7Z" fill="#a9c4ea" /><path d="M649.2 975.3H654.5V979.8H649.2Z" fill="#7fa3da" /><path d="M650.4000000000001 976.5H653.3000000000001V978.5999999999999H650.4000000000001Z" fill="#a9c4ea" /><path d="M642.5 981.1H647.8V985.6H642.5Z" fill="#7fa3da" /><path d="M643.7 982.3000000000001H646.6V984.4H643.7Z" fill="#a9c4ea" /><path d="M649.2 981.1H654.5V985.6H649.2Z" fill="#7fa3da" /><path d="M650.4000000000001 982.3000000000001H653.3000000000001V984.4H650.4000000000001Z" fill="#a9c4ea" /><path d="M659.1 979.2H665.1L662.1 982.8Z" fill="#2e2e2e" /><path d="M11.9 1016H14V1030H11.9ZM24 1016V1030L14.6 1023Z" fill="#484848" /><path d="M46.3 1016V1030L36.2 1023ZM47.4 1019.7H49.5V1026.3H47.4Z" fill="#484848" /><path d="M62 1015.4L74.2 1023.2L62 1031Z" fill="#484848" /><path d="M85.6 1019.7H87.7V1026.3H85.6ZM88.7 1016L98.8 1023L88.7 1030Z" fill="#484848" /><path d="M112.1 1016L122.1 1023L112.1 1030ZM122.1 1016H124.2V1030H122.1Z" fill="#484848" /><path d="M148.3 1018.1L152.3 1014.3H162.9V1024.2L159 1028.6H148.3Z" fill="#fbfbfc" /><path d="M149.2 1019H158.2V1027.8H149.2Z" fill="#e3e5ea" /><path d="M159.6 1018.6L162.2 1015.8V1024L159.6 1027.2Z" fill="#d6d9e0" /><path d="M148.3 1021.4V1018.1L152.3 1014.3H162.9V1024.2L159 1028.6H148.3V1025.4" fill="none" stroke="#2f2f38" stroke-width="1.3" stroke-linejoin="round"/><path d="M148.6 1023.1H154M153.4 1020.6L156.6 1023.1L153.4 1025.7Z" fill="#333" stroke="#333" stroke-width="1.2" stroke-linejoin="round"/><path d="M171.1 1017H180.29999999999998V1026.8H171.1Z" fill="#69ade7" /><path d="M171.1 1017L173.79999999999998 1014.1H183.2L180.29999999999998 1017Z" fill="#8ec6f6" /><path d="M180.29999999999998 1017L183.2 1014.1V1024L180.29999999999998 1026.8Z" fill="#4b93d4" /><path d="M171.1 1028.1H180.29999999999998L183.0 1025.4V1027L180.5 1029.7H171.1Z" fill="#c2c2c2" /><path d="M185.4 1026.8V1016" fill="none" stroke="#2a2a2a" stroke-width="1.1" /><path d="M183.79999999999998 1017.4L185.4 1014.6L187.0 1017.4Z" fill="#2a2a2a" /><path d="M194.9 1017H204.1V1026.8H194.9Z" fill="#69ade7" /><path d="M194.9 1017L197.6 1014.1H207.0L204.1 1017Z" fill="#8ec6f6" /><path d="M204.1 1017L207.0 1014.1V1024L204.1 1026.8Z" fill="#4b93d4" /><path d="M194.9 1028.1H204.1L206.8 1025.4V1027L204.3 1029.7H194.9Z" fill="#c2c2c2" /><path d="M209.20000000000002 1026.8V1016" fill="none" stroke="#2a2a2a" stroke-width="1.1" /><path d="M207.6 1017.4L209.20000000000002 1014.6L210.8 1017.4Z" fill="#2a2a2a" /><path d="M148 1038H212V1039.9H148Z" fill="#cfcfcf" /><path d="M155.2 1033H156.9V1038H155.2ZM178.2 1033H179.9V1038H178.2ZM202.1 1033H203.8V1038H202.1Z" fill="#cfcfcf" /><path d="M1089.22 1020.97L1089.22 1024.63L1086.63 1025.00L1086.31 1025.79L1087.87 1027.88L1085.28 1030.47L1083.19 1028.91L1082.41 1029.23L1082.03 1031.82L1078.37 1031.82L1078.00 1029.23L1077.21 1028.91L1075.12 1030.47L1072.53 1027.88L1074.09 1025.79L1073.77 1025.01L1071.18 1024.63L1071.18 1020.97L1073.77 1020.60L1074.09 1019.81L1072.53 1017.72L1075.12 1015.13L1077.21 1016.69L1077.99 1016.37L1078.37 1013.78L1082.03 1013.78L1082.40 1016.37L1083.19 1016.69L1085.28 1015.13L1087.87 1017.72L1086.31 1019.81L1086.63 1020.59Z" fill="#8f8f8f" /><circle cx="1080.2" cy="1022.8" r="3.2" fill="#f1f1f1"/></svg>
<svg style="left:0;top:0" width="1102" height="300" viewBox="0 0 1102 300"><defs><filter id="vb" x="-50%" y="-50%" width="200%" height="200%"><feGaussianBlur stdDeviation="4.5"/></filter><filter id="tb"><feGaussianBlur stdDeviation="0.35"/></filter><linearGradient id="vt" x1="0" y1="0" x2="0" y2="1"><stop offset="0" stop-color="#f3f3f3"/><stop offset="1" stop-color="#ececec"/></linearGradient><linearGradient id="vf" x1="0" y1="0" x2="0.3" y2="1"><stop offset="0" stop-color="#eeeeee"/><stop offset="1" stop-color="#dcdcdc"/></linearGradient><linearGradient id="vr" x1="0" y1="0" x2="0" y2="1"><stop offset="0" stop-color="#ebebeb"/><stop offset="1" stop-color="#d9d9d9"/></linearGradient></defs><ellipse cx="1040" cy="237" rx="36" ry="14" fill="#9a9a9a" opacity="0.55" filter="url(#vb)"/><path d="M1006 228L1037.3 250L1069 228L1037 210Z" fill="#8a8a8a" opacity="0.5" filter="url(#vb)"/><path d="M1037.3 172.6L1072.8 188L1037.3 207.3L1002.5 188Z" fill="url(#vt)" stroke="#8e8e8e" stroke-width="0.7"/><path d="M1002.5 188L1037.3 207.3V249.2L1005.7 227Z" fill="url(#vf)" stroke="#8e8e8e" stroke-width="0.7"/><path d="M1037.3 207.3L1072.8 188L1068.9 227.3L1037.3 249.2Z" fill="url(#vr)" stroke="#8e8e8e" stroke-width="0.7"/><path d="M1037.3 200L1044.5 204V212L1037.3 215.5L1030 212V204Z" fill="#dfe3ec" opacity="0.7"/><g filter="url(#tb)"><text transform="matrix(0.80 0.36 -0.62 0.58 1030.6 184.2)" font-family="Liberation Sans" font-size="9.6" fill="#a3a6ab">TOP</text><text transform="matrix(0.80 0.52 -0.07 0.99 1009.2 210.8)" font-family="Liberation Sans" font-size="9.2" fill="#a3a6ab">FRONT</text><text transform="matrix(0.80 -0.50 0.10 0.99 1044.6 231.2)" font-family="Liberation Sans" font-size="9.4" fill="#a3a6ab">RIGHT</text></g><path d="M1001 181.6L1005.7 227" stroke="#4c4cf5" stroke-width="2" fill="none"/><path d="M1005.7 227L1043 255" stroke="#e48a8a" stroke-width="2" fill="none"/><text x="995.5" y="178.5" font-family="Liberation Sans" font-size="13.5" font-weight="bold" fill="#7f7ff2" filter="url(#tb)">Z</text><text x="1044.3" y="264" font-family="Liberation Sans" font-size="13.5" font-weight="bold" fill="#ff8d8d" filter="url(#tb)">X</text></svg>
<svg style="left:0;top:0" width="1102" height="1048" viewBox="0 0 1102 1048">
<defs>
<linearGradient id="hg" x1="0" x2="1"><stop offset="0" stop-color="#a5433a"/><stop offset="0.5" stop-color="#953830"/><stop offset="1" stop-color="#a84138"/></linearGradient>
<linearGradient id="lg" x1="0" x2="1"><stop offset="0" stop-color="#a84239"/><stop offset="1" stop-color="#9a3a32"/></linearGradient>
<linearGradient id="bg2" x1="0" x2="1"><stop offset="0" stop-color="#9a3a32"/><stop offset="0.5" stop-color="#943730"/><stop offset="1" stop-color="#8b342d"/></linearGradient>
<linearGradient id="rg" x1="0" x2="1"><stop offset="0" stop-color="#8b342d"/><stop offset="1" stop-color="#a54138"/></linearGradient>
<linearGradient id="motor" gradientUnits="userSpaceOnUse" x1="380" y1="600" x2="445" y2="562"><stop offset="0" stop-color="#8fa5c6"/><stop offset="0.35" stop-color="#a2b6d4"/><stop offset="0.6" stop-color="#8fa4c4"/><stop offset="1" stop-color="#a6b9d7"/></linearGradient>
</defs>
<path d="M489.6 451.9C496.8 447.8 508.4 447.8 515.6 451.9L887.8 666.8C895.0 670.9 895.0 677.7 887.8 681.8L594.6 851.1C587.4 855.2 575.8 855.2 568.6 851.1L196.4 636.2C189.2 632.1 189.2 625.3 196.4 621.2Z" fill="#93372f"/>
<path d="M196.4 621.7L568.6 836.6L568.6 851.1L196.4 636.2Z" fill="#9b3b33"/>
<path d="M594.6 836.6L887.8 667.3L887.8 681.8L594.6 851.1Z" fill="#8b342d"/>
<path d="M191.0 614.2L191.0 614.7L191.1 615.2L191.2 615.7L191.3 616.2L191.5 616.7L191.8 617.2L192.0 617.7L192.4 618.2L192.7 618.7L193.1 619.1L193.6 619.6L194.0 620.0L194.6 620.5L195.1 620.9L195.7 621.3L196.4 621.7L196.4 636.2L195.7 635.8L195.1 635.4L194.6 635.0L194.0 634.5L193.6 634.1L193.1 633.6L192.7 633.2L192.4 632.7L192.0 632.2L191.8 631.7L191.5 631.2L191.3 630.7L191.2 630.2L191.1 629.7L191.0 629.2L191.0 628.7Z" fill="url(#lg)"/>
<path d="M568.6 836.6L570.0 837.3L571.5 838.0L573.1 838.5L574.7 838.9L576.4 839.3L578.1 839.5L579.8 839.7L581.6 839.7L583.4 839.7L585.1 839.5L586.8 839.3L588.5 838.9L590.1 838.5L591.7 838.0L593.2 837.3L594.6 836.6L594.6 851.1L593.2 851.8L591.7 852.5L590.1 853.0L588.5 853.4L586.8 853.8L585.1 854.0L583.4 854.2L581.6 854.2L579.8 854.2L578.1 854.0L576.4 853.8L574.7 853.4L573.1 853.0L571.5 852.5L570.0 851.8L568.6 851.1Z" fill="url(#bg2)"/>
<path d="M887.8 667.3L888.5 666.9L889.1 666.5L889.6 666.1L890.2 665.6L890.6 665.2L891.1 664.7L891.5 664.3L891.8 663.8L892.2 663.3L892.4 662.8L892.7 662.3L892.9 661.8L893.0 661.3L893.1 660.8L893.2 660.3L893.2 659.8L893.2 674.3L893.2 674.8L893.1 675.3L893.0 675.8L892.9 676.3L892.7 676.8L892.4 677.3L892.2 677.8L891.8 678.3L891.5 678.8L891.1 679.2L890.6 679.7L890.2 680.1L889.6 680.6L889.1 681.0L888.5 681.4L887.8 681.8Z" fill="url(#rg)"/>
<path d="M196.4 621.7L196.4 636.2" stroke="#7d2f29" stroke-width="0.7" fill="none"/>
<path d="M568.6 836.6L568.6 851.1" stroke="#7d2f29" stroke-width="0.7" fill="none"/>
<path d="M594.6 836.6L594.6 851.1" stroke="#7d2f29" stroke-width="0.7" fill="none"/>
<path d="M887.8 667.3L887.8 681.8" stroke="#7d2f29" stroke-width="0.7" fill="none"/>
<path d="M489.6 437.4C496.8 433.3 508.4 433.3 515.6 437.4L887.8 652.3C895.0 656.4 895.0 663.2 887.8 667.3L594.6 836.6C587.4 840.7 575.8 840.7 568.6 836.6L196.4 621.7C189.2 617.6 189.2 610.8 196.4 606.7Z" fill="#b0463c"/>
<path d="M196.4 606.7C189.2 610.8 189.2 617.6 196.4 621.7L568.6 836.6C575.8 840.7 587.4 840.7 594.6 836.6L887.8 667.3C895.0 663.2 895.0 656.4 887.8 652.3" stroke="#8a332c" stroke-width="0.8" fill="none" opacity="0.7"/>
<ellipse cx="510" cy="480.4" rx="8.3" ry="5.2" fill="url(#hg)" stroke="#8a332c" stroke-width="0.8"/>
<ellipse cx="270.6" cy="618.5" rx="8.3" ry="5.2" fill="url(#hg)" stroke="#8a332c" stroke-width="0.8"/>
<ellipse cx="806.5" cy="622.1" rx="8.3" ry="5.2" fill="url(#hg)" stroke="#8a332c" stroke-width="0.8"/>
<path d="M333.6 586.5L346.0 579.5L350.4 581.4L363.1 564.9L373.3 558.5L377.7 559.1L380.9 552.2L391.1 548.7L401.2 549.2L413.9 554.7L418.4 556.6L419.7 546.4L422.8 543.6L428.5 545.8L430.4 550.2L428.2 562.3L452.0 575.5L466.0 575.2L494.0 589.9L511.0 581.0L544.8 599.5L572.4 593.8L690.6 653.8L697.0 658.5L700.2 666.0L700.3 680.0L699.8 764.0L697.0 770.2L606.8 822.8L601.0 823.3L576.6 810.0L554.9 797.1L522.9 801.5L511.3 801.5L501.1 797.4L496.1 790.2L496.1 778.6L501.1 765.5L463.4 744.4L461.9 738.6L453.2 738.6L438.0 729.2L437.4 708.8L425.4 703.1L402.5 689.1L406.3 685.9L333.6 644.6Z" fill="#a4b8d8" stroke="#6e3c5c" stroke-width="4" stroke-linejoin="round"/>
<path d="M333.6 586.5L346.0 579.5L350.4 581.4L363.1 564.9L373.3 558.5L377.7 559.1L380.9 552.2L391.1 548.7L401.2 549.2L413.9 554.7L418.4 556.6L419.7 546.4L422.8 543.6L428.5 545.8L430.4 550.2L428.2 562.3L452.0 575.5L466.0 575.2L494.0 589.9L511.0 581.0L544.8 599.5L572.4 593.8L690.6 653.8L697.0 658.5L700.2 666.0L700.3 680.0L699.8 764.0L697.0 770.2L606.8 822.8L601.0 823.3L576.6 810.0L554.9 797.1L522.9 801.5L511.3 801.5L501.1 797.4L496.1 790.2L496.1 778.6L501.1 765.5L463.4 744.4L461.9 738.6L453.2 738.6L438.0 729.2L437.4 708.8L425.4 703.1L402.5 689.1L406.3 685.9L333.6 644.6Z" fill="#a4b8d8" stroke="#0c0c40" stroke-width="1.5" stroke-linejoin="round"/>
<path d="M494.0 590.2L511.0 581.3L544.8 599.8L572.4 594.2L690.4 654.2L696.5 659.0L699.5 666.0L699.5 680.0L693.0 683.5L611.5 730.0L608.0 735.0L589.6 691.0L439.4 622.3Z" fill="#abbedc" stroke-linejoin="round"/>
<path d="M452.0 576.0L466.0 575.8L494.0 590.4L439.4 622.3L438.1 643.2L426.6 639.2L405.0 619.5L409.0 611.0L416.5 602.3L426.6 591.0L439.3 581.4Z" fill="#adc0de" stroke-linejoin="round"/>
<path d="M452.0 576.0L466.0 575.8L494.0 590.4L480.0 598.0L440.0 582.0Z" fill="#b6c8e4" stroke-linejoin="round"/>
<path d="M365.7 597.3L368.8 590.9L378.4 576.9L388.5 566.1L398.1 567.4L402.5 564.9L401.2 561.0L406.3 558.5L418.4 557.2L428.2 562.3L452.0 575.9L439.3 581.4L426.6 590.9L416.5 602.3L408.9 611.2L405.0 618.9Z" fill="url(#motor)" stroke="#586a8e" stroke-width="0.6" stroke-linejoin="round"/>
<path d="M452.0 575.9L445.0 578.0L438.1 581.6L428.0 588.5L419.1 596.8L411.5 607.0L405.1 619.7" fill="none" stroke="#5f7399" stroke-width="0.7" stroke-linejoin="round" stroke-linecap="round"/>
<path d="M346.0 586.5L352.3 578.8L363.1 565.5L373.3 559.1L377.7 559.7L380.9 552.8L391.1 549.3L401.2 549.8L413.9 555.3L418.4 557.2L406.3 558.5L401.2 561.0L402.5 564.9L398.1 567.4L388.5 566.1L378.4 576.9L368.8 590.9L365.7 597.3Z" fill="#c3d4eb" stroke="#586a8e" stroke-width="0.6" stroke-linejoin="round"/>
<path d="M352.3 578.8L356.0 581.0L366.0 567.0L374.5 561.5" fill="none" stroke="#5f7399" stroke-width="0.7" stroke-linejoin="round" stroke-linecap="round"/>
<path d="M380.9 552.8L398.0 562.0" fill="none" stroke="#5f7399" stroke-width="0.7" stroke-linejoin="round" stroke-linecap="round"/>
<path d="M386.0 550.5L402.0 559.5" fill="none" stroke="#5f7399" stroke-width="0.7" stroke-linejoin="round" stroke-linecap="round"/>
<path d="M356.0 581.0L350.0 589.0" fill="none" stroke="#5f7399" stroke-width="0.7" stroke-linejoin="round" stroke-linecap="round"/>
<path d="M420.5 556.0L421.5 547.5L423.3 545.6L427.6 547.2L428.8 550.5L427.0 561.0Z" fill="#c9cfd8" stroke="#1d1d5e" stroke-width="0.9" stroke-linejoin="round"/>
<path d="M423.0 555.0L423.8 549.5L425.0 548.5L426.5 549.5L425.5 557.5Z" fill="#b0463c" stroke="#7d8aa6" stroke-width="0.5" stroke-linejoin="round"/>
<path d="M334.5 589.0L426.6 639.2L438.0 645.0" fill="none" stroke="#5f7399" stroke-width="0.7" stroke-linejoin="round" stroke-linecap="round"/>
<path d="M344.7 587.1L425.4 633.5L427.5 636.0L426.6 639.2" fill="none" stroke="#5f7399" stroke-width="0.7" stroke-linejoin="round" stroke-linecap="round"/>
<path d="M365.7 597.3L405.0 619.5L424.5 630.5" fill="none" stroke="#5f7399" stroke-width="0.7" stroke-linejoin="round" stroke-linecap="round"/>
<path d="M365.3 599.3L404.0 621.5" fill="none" stroke="#5f7399" stroke-width="0.7" stroke-linejoin="round" stroke-linecap="round"/>
<path d="M335.2 589.5L335.2 645.0" fill="none" stroke="#7c8fb3" stroke-width="0.6" stroke-linejoin="round" stroke-linecap="round"/>
<path d="M438.1 622.3L438.1 643.5" fill="none" stroke="#5f7399" stroke-width="0.7" stroke-linejoin="round" stroke-linecap="round"/>
<path d="M440.8 623.5L440.8 645.0" fill="none" stroke="#5f7399" stroke-width="0.7" stroke-linejoin="round" stroke-linecap="round"/>
<path d="M494.0 590.5L439.4 622.3" fill="none" stroke="#5f7399" stroke-width="0.7" stroke-linejoin="round" stroke-linecap="round"/>
<path d="M438.1 581.6L514.3 624.8" fill="none" stroke="#5f7399" stroke-width="0.7" stroke-linejoin="round" stroke-linecap="round"/>
<path d="M444.5 623.5L468.6 636.2L466.0 638.0" fill="none" stroke="#5f7399" stroke-width="0.7" stroke-linejoin="round" stroke-linecap="round"/>
<path d="M514.3 624.8L477.5 644.5" fill="none" stroke="#5f7399" stroke-width="0.7" stroke-linejoin="round" stroke-linecap="round"/>
<path d="M515.5 626.5L482.0 645.5" fill="none" stroke="#5f7399" stroke-width="0.7" stroke-linejoin="round" stroke-linecap="round"/>
<path d="M514.8 624.8L514.8 632.5" fill="none" stroke="#5f7399" stroke-width="0.7" stroke-linejoin="round" stroke-linecap="round"/>
<path d="M510.2 631.4L549.4 649.3L529.8 663.5L495.0 646.1" fill="none" stroke="#5f7399" stroke-width="0.7" stroke-linejoin="round" stroke-linecap="round"/>
<path d="M439.4 627.0L495.0 655.3L587.4 700.8" fill="none" stroke="#5f7399" stroke-width="0.7" stroke-linejoin="round" stroke-linecap="round"/>
<path d="M514.6 624.8L541.8 608.5L542.9 618.3L515.1 633.0Z" fill="#b7c8e4" stroke="#586a8e" stroke-width="0.6" stroke-linejoin="round"/>
<path d="M514.6 624.8L541.8 608.0L571.2 594.9" fill="none" stroke="#5f7399" stroke-width="0.7" stroke-linejoin="round" stroke-linecap="round"/>
<path d="M544.5 607.4L544.5 618.3" fill="none" stroke="#5f7399" stroke-width="0.7" stroke-linejoin="round" stroke-linecap="round"/>
<path d="M546.2 609.6L546.2 617.2" fill="none" stroke="#5f7399" stroke-width="0.7" stroke-linejoin="round" stroke-linecap="round"/>
<path d="M546.2 609.6L552.0 606.0L560.3 604.2L569.0 602.5L604.4 619.4L588.7 628.7" fill="none" stroke="#5f7399" stroke-width="0.7" stroke-linejoin="round" stroke-linecap="round"/>
<path d="M541.8 608.0L552.0 603.5L568.0 600.9L571.0 602.3L602.3 618.9" fill="none" stroke="#5f7399" stroke-width="0.7" stroke-linejoin="round" stroke-linecap="round"/>
<path d="M548.4 611.2L586.5 629.7" fill="none" stroke="#5f7399" stroke-width="0.7" stroke-linejoin="round" stroke-linecap="round"/>
<path d="M546.2 617.2L579.9 633.6" fill="none" stroke="#5f7399" stroke-width="0.7" stroke-linejoin="round" stroke-linecap="round"/>
<path d="M569.0 627.6L569.0 634.0" fill="none" stroke="#5f7399" stroke-width="0.7" stroke-linejoin="round" stroke-linecap="round"/>
<path d="M615.0 631.4L573.4 655.3" fill="none" stroke="#5f7399" stroke-width="0.7" stroke-linejoin="round" stroke-linecap="round"/>
<path d="M586.5 629.7L550.5 650.2" fill="none" stroke="#5f7399" stroke-width="0.7" stroke-linejoin="round" stroke-linecap="round"/>
<path d="M520.0 633.6L527.7 628.1L538.6 624.8L549.5 624.8L556.0 627.0L562.5 629.7L569.0 634.6L570.1 637.9L562.5 643.4L557.1 645.5L550.5 649.9L546.2 648.8Z" fill="#c9c5b4" stroke="#6c7f9f" stroke-width="0.6" stroke-linejoin="round"/>
<path d="M523.5 634.0L525.1 628.5L527.3 629.5L525.7 635.1Z" fill="#c9c5b4" stroke="#566a90" stroke-width="0.7" stroke-linejoin="round"/>
<path d="M527.0 633.0L528.6 627.2L530.8 628.2L529.2 634.1Z" fill="#c9c5b4" stroke="#566a90" stroke-width="0.7" stroke-linejoin="round"/>
<path d="M530.5 632.6L532.1 626.5L534.3 627.5L532.7 633.7Z" fill="#c9c5b4" stroke="#566a90" stroke-width="0.7" stroke-linejoin="round"/>
<path d="M534.0 632.6L535.6 626.2L537.8 627.2L536.2 633.7Z" fill="#c9c5b4" stroke="#566a90" stroke-width="0.7" stroke-linejoin="round"/>
<path d="M537.5 633.0L539.1 626.3L541.3 627.3L539.7 634.1Z" fill="#c9c5b4" stroke="#566a90" stroke-width="0.7" stroke-linejoin="round"/>
<path d="M541.0 633.6L542.6 626.6L544.8 627.6L543.2 634.7Z" fill="#c9c5b4" stroke="#566a90" stroke-width="0.7" stroke-linejoin="round"/>
<path d="M545.0 634.5L545.8 627.0L549.0 628.4L548.2 636.1Z" fill="#c9c5b4" stroke="#566a90" stroke-width="0.7" stroke-linejoin="round"/>
<path d="M549.6 636.3L550.4 627.8L554.2 629.5L553.4 638.2Z" fill="#c9c5b4" stroke="#566a90" stroke-width="0.7" stroke-linejoin="round"/>
<path d="M554.8 638.8L555.6 630.2L560.0 632.2L559.2 641.0Z" fill="#c9c5b4" stroke="#566a90" stroke-width="0.7" stroke-linejoin="round"/>
<path d="M560.6 641.8L561.4 633.8L566.2 636.0L565.4 644.2Z" fill="#c9c5b4" stroke="#566a90" stroke-width="0.7" stroke-linejoin="round"/>
<path d="M566.0 644.6L566.8 637.6L570.4 639.2L569.6 646.4Z" fill="#c9c5b4" stroke="#566a90" stroke-width="0.7" stroke-linejoin="round"/>
<path d="M532.0 641.5L540.0 638.8L548.0 639.3L556.0 642.5L560.0 645.5" fill="none" stroke="#6c7f9f" stroke-width="0.6" stroke-linejoin="round" stroke-linecap="round"/>
<path d="M545.3 671.4L620.2 628.5L624.1 629.3L681.9 657.0" fill="none" stroke="#5f7399" stroke-width="0.7" stroke-linejoin="round" stroke-linecap="round"/>
<path d="M550.3 673.2L615.6 636.2L653.4 654.7L604.8 682.5" fill="none" stroke="#5f7399" stroke-width="0.7" stroke-linejoin="round" stroke-linecap="round"/>
<path d="M545.3 671.4L587.4 692.1L590.3 690.3L609.5 699.4L601.9 704.1L591.4 698.3L591.4 708.0" fill="none" stroke="#5f7399" stroke-width="0.7" stroke-linejoin="round" stroke-linecap="round"/>
<path d="M587.4 700.8L587.4 712.0" fill="none" stroke="#5f7399" stroke-width="0.7" stroke-linejoin="round" stroke-linecap="round"/>
<path d="M609.5 699.4L629.5 684.0" fill="none" stroke="#5f7399" stroke-width="0.7" stroke-linejoin="round" stroke-linecap="round"/>
<path d="M568.5 663.4L575.4 659.1L575.7 667.1Z" fill="#b7c8e4" stroke="#586a8e" stroke-width="0.5" stroke-linejoin="round"/>
<path d="M568.5 663.4L575.7 667.1" fill="none" stroke="#5f7399" stroke-width="0.7" stroke-linejoin="round" stroke-linecap="round"/>
<path d="M575.5 657.0L615.6 637.0L615.6 643.1L576.3 666.3Z" fill="#b7c8e4" stroke="#586a8e" stroke-width="0.6" stroke-linejoin="round"/>
<path d="M615.6 636.2L615.6 643.1" fill="none" stroke="#5f7399" stroke-width="0.7" stroke-linejoin="round" stroke-linecap="round"/>
<path d="M577.0 666.3L590.9 657.0L606.3 649.3L620.2 648.5L632.6 654.7L638.7 658.6L638.0 662.4L626.4 667.8L607.9 679.4L604.0 681.7L590.9 674.0Z" fill="#c9c5b4" stroke="#6c7f9f" stroke-width="0.6" stroke-linejoin="round"/>
<path d="M581.0 665.0L582.8 659.8L585.0 660.8L583.2 666.1Z" fill="#c9c5b4" stroke="#566a90" stroke-width="0.7" stroke-linejoin="round"/>
<path d="M585.0 662.6L586.8 657.1L589.0 658.1L587.2 663.7Z" fill="#c9c5b4" stroke="#566a90" stroke-width="0.7" stroke-linejoin="round"/>
<path d="M589.0 660.4L590.8 654.7L593.0 655.7L591.2 661.5Z" fill="#c9c5b4" stroke="#566a90" stroke-width="0.7" stroke-linejoin="round"/>
<path d="M593.0 658.6L594.8 652.6L597.0 653.6L595.2 659.7Z" fill="#c9c5b4" stroke="#566a90" stroke-width="0.7" stroke-linejoin="round"/>
<path d="M597.0 657.2L598.8 651.0L601.0 652.0L599.2 658.3Z" fill="#c9c5b4" stroke="#566a90" stroke-width="0.7" stroke-linejoin="round"/>
<path d="M601.0 656.3L602.8 649.8L605.0 650.8L603.2 657.4Z" fill="#c9c5b4" stroke="#566a90" stroke-width="0.7" stroke-linejoin="round"/>
<path d="M605.0 655.8L606.8 649.1L609.0 650.1L607.2 656.9Z" fill="#c9c5b4" stroke="#566a90" stroke-width="0.7" stroke-linejoin="round"/>
<path d="M609.0 655.8L610.8 648.8L613.0 649.8L611.2 656.9Z" fill="#c9c5b4" stroke="#566a90" stroke-width="0.7" stroke-linejoin="round"/>
<path d="M613.0 656.6L613.8 649.4L617.0 650.8L616.2 658.2Z" fill="#c9c5b4" stroke="#566a90" stroke-width="0.7" stroke-linejoin="round"/>
<path d="M617.6 658.0L618.4 649.8L622.2 651.5L621.4 659.9Z" fill="#c9c5b4" stroke="#566a90" stroke-width="0.7" stroke-linejoin="round"/>
<path d="M622.8 660.2L623.6 651.8L628.0 653.8L627.2 662.4Z" fill="#c9c5b4" stroke="#566a90" stroke-width="0.7" stroke-linejoin="round"/>
<path d="M628.4 663.0L629.2 655.4L633.8 657.5L633.0 665.3Z" fill="#c9c5b4" stroke="#566a90" stroke-width="0.7" stroke-linejoin="round"/>
<path d="M633.6 665.6L634.4 659.2L637.8 660.7L637.0 667.3Z" fill="#c9c5b4" stroke="#566a90" stroke-width="0.7" stroke-linejoin="round"/>
<path d="M596.0 668.5L603.0 664.3L612.0 663.2L620.0 665.5L625.0 669.3" fill="none" stroke="#6c7f9f" stroke-width="0.6" stroke-linejoin="round" stroke-linecap="round"/>
<path d="M585.0 669.0L589.5 666.4L592.5 668.2L592.5 670.8L588.0 673.5L585.0 671.6Z" fill="#c9c5b4" stroke="#566a90" stroke-width="0.7" stroke-linejoin="round"/>
<path d="M591.0 672.5L595.5 669.9L598.5 671.7L598.5 674.3L594.0 677.0L591.0 675.1Z" fill="#c9c5b4" stroke="#566a90" stroke-width="0.7" stroke-linejoin="round"/>
<path d="M597.5 676.0L602.0 673.4L605.0 675.2L605.0 677.8L600.5 680.5L597.5 678.6Z" fill="#c9c5b4" stroke="#566a90" stroke-width="0.7" stroke-linejoin="round"/>
<path d="M614.0 677.9L629.5 684.0" fill="none" stroke="#5f7399" stroke-width="0.7" stroke-linejoin="round" stroke-linecap="round"/>
<path d="M629.5 684.0L688.1 654.7" fill="none" stroke="#5f7399" stroke-width="0.7" stroke-linejoin="round" stroke-linecap="round"/>
<path d="M609.5 699.4L629.5 684.0L640.3 689.4L644.9 698.7L645.7 709.5L641.8 712.6L612.0 729.8L601.9 704.1Z" fill="#b0c2df" stroke-linejoin="round"/>
<path d="M629.5 684.0L640.3 689.4L644.9 698.7L645.7 709.5" fill="none" stroke="#5f7399" stroke-width="0.7" stroke-linejoin="round" stroke-linecap="round"/>
<path d="M641.8 712.6L694.3 681.7" fill="none" stroke="#5f7399" stroke-width="0.7" stroke-linejoin="round" stroke-linecap="round"/>
<path d="M612.0 729.8L641.8 712.6" fill="none" stroke="#5f7399" stroke-width="0.7" stroke-linejoin="round" stroke-linecap="round"/>
<path d="M688.1 654.7L690.4 654.2L696.5 659.0L699.5 666.0L699.5 680.0L694.3 681.7L693.5 668.0L691.0 660.0Z" fill="#b4c6e2" stroke-linejoin="round"/>
<path d="M608.0 737.0L608.0 821.5" fill="none" stroke="#5f7399" stroke-width="0.7" stroke-linejoin="round" stroke-linecap="round"/>
<path d="M611.5 735.0L611.5 819.5" fill="none" stroke="#5f7399" stroke-width="0.7" stroke-linejoin="round" stroke-linecap="round"/>
<path d="M611.5 806.0L693.1 764.4" fill="none" stroke="#5f7399" stroke-width="0.7" stroke-linejoin="round" stroke-linecap="round"/>
<path d="M693.1 683.0L693.1 765.5" fill="none" stroke="#5f7399" stroke-width="0.7" stroke-linejoin="round" stroke-linecap="round"/>
<path d="M696.0 681.5L696.0 767.0" fill="none" stroke="#5f7399" stroke-width="0.7" stroke-linejoin="round" stroke-linecap="round"/>
<path d="M631.5 725.8L681.6 701.5L681.6 758.0L631.5 790.2L631.5 725.8" fill="none" stroke="#5f7399" stroke-width="0.7" stroke-linejoin="round" stroke-linecap="round"/>
<path d="M675.9 704.3L675.9 755.1L641.6 776.5" fill="none" stroke="#5f7399" stroke-width="0.7" stroke-linejoin="round" stroke-linecap="round"/>
<path d="M681.6 758.0L675.9 755.1" fill="none" stroke="#5f7399" stroke-width="0.7" stroke-linejoin="round" stroke-linecap="round"/>
<path d="M641.6 711.5L641.6 722.0" fill="none" stroke="#5f7399" stroke-width="0.7" stroke-linejoin="round" stroke-linecap="round"/>
<path d="M641.6 786.0L641.6 800.5L693.0 771.0" fill="none" stroke="#5f7399" stroke-width="0.7" stroke-linejoin="round" stroke-linecap="round"/>
<path d="M638.5 790.0L638.5 803.0" fill="none" stroke="#5f7399" stroke-width="0.7" stroke-linejoin="round" stroke-linecap="round"/>
<path d="M631.5 790.2L641.6 785.5L681.6 763.0" fill="none" stroke="#5f7399" stroke-width="0.7" stroke-linejoin="round" stroke-linecap="round"/>
<path d="M631.5 726.0L675.9 704.5L675.9 755.0L631.5 781.0Z" fill="#a0b4d4" stroke-linejoin="round"/>
<path d="M631.8 771.6L637.0 768.0L644.5 764.0L652.0 759.8L659.5 755.0L666.0 749.0L671.0 742.0L673.0 736.0L668.0 733.0L664.5 741.0L659.0 748.0L652.5 753.5L645.0 758.5L638.0 762.5L631.8 766.0Z" fill="#c9c5b4" stroke="#6c7f9f" stroke-width="0.5" stroke-linejoin="round"/>
<path d="M642.5 722.0L656.0 715.2L657.3 728.0L656.5 737.0L653.5 745.0L649.0 752.0L644.0 758.0L638.0 763.0L632.0 767.0L631.8 764.0L642.5 757.0Z" fill="#c9c5b4" stroke="#6c7f9f" stroke-width="0.6" stroke-linejoin="round"/>
<path d="M634.0 769.0L635.7 763.2" fill="none" stroke="#6c7f9f" stroke-width="0.8" stroke-linejoin="round" stroke-linecap="round"/>
<path d="M637.5 767.0L638.9 761.2" fill="none" stroke="#6c7f9f" stroke-width="0.8" stroke-linejoin="round" stroke-linecap="round"/>
<path d="M641.0 765.0L642.0 759.1" fill="none" stroke="#6c7f9f" stroke-width="0.8" stroke-linejoin="round" stroke-linecap="round"/>
<path d="M644.5 763.2L645.0 757.2" fill="none" stroke="#6c7f9f" stroke-width="0.8" stroke-linejoin="round" stroke-linecap="round"/>
<path d="M648.0 761.2L648.0 755.2" fill="none" stroke="#6c7f9f" stroke-width="0.8" stroke-linejoin="round" stroke-linecap="round"/>
<path d="M652.0 759.0L651.4 753.0" fill="none" stroke="#6c7f9f" stroke-width="0.8" stroke-linejoin="round" stroke-linecap="round"/>
<path d="M655.9 756.8L654.6 750.9" fill="none" stroke="#6c7f9f" stroke-width="0.8" stroke-linejoin="round" stroke-linecap="round"/>
<path d="M659.5 754.3L657.5 748.6" fill="none" stroke="#6c7f9f" stroke-width="0.8" stroke-linejoin="round" stroke-linecap="round"/>
<path d="M663.0 751.3L660.3 746.0" fill="none" stroke="#6c7f9f" stroke-width="0.8" stroke-linejoin="round" stroke-linecap="round"/>
<path d="M666.5 747.5L663.0 742.6" fill="none" stroke="#6c7f9f" stroke-width="0.8" stroke-linejoin="round" stroke-linecap="round"/>
<path d="M669.5 743.5L665.3 739.3" fill="none" stroke="#6c7f9f" stroke-width="0.8" stroke-linejoin="round" stroke-linecap="round"/>
<path d="M671.8 739.0L666.9 735.5" fill="none" stroke="#6c7f9f" stroke-width="0.8" stroke-linejoin="round" stroke-linecap="round"/>
<path d="M659.0 712.3L671.0 706.7L673.0 707.9L673.0 710.7L662.5 715.5L659.5 714.7Z" fill="#c9c5b4" stroke="#6c7f9f" stroke-width="0.6" stroke-linejoin="round"/>
<path d="M659.0 718.5L671.0 712.9L673.0 714.1L673.0 716.9L662.5 721.7L659.5 720.9Z" fill="#c9c5b4" stroke="#6c7f9f" stroke-width="0.6" stroke-linejoin="round"/>
<path d="M659.0 724.7L671.0 719.1L673.0 720.3L673.0 723.1L662.5 727.9L659.5 727.1Z" fill="#c9c5b4" stroke="#6c7f9f" stroke-width="0.6" stroke-linejoin="round"/>
<path d="M659.0 730.9L671.0 725.3L673.0 726.5L673.0 729.3L662.5 734.1L659.5 733.3Z" fill="#c9c5b4" stroke="#6c7f9f" stroke-width="0.6" stroke-linejoin="round"/>
<path d="M659.0 737.1L671.0 731.5L673.0 732.7L673.0 735.5L662.5 740.3L659.5 739.5Z" fill="#c9c5b4" stroke="#6c7f9f" stroke-width="0.6" stroke-linejoin="round"/>
<path d="M659.0 743.3L671.0 737.7L673.0 738.9L673.0 741.7L662.5 746.5L659.5 745.7Z" fill="#c9c5b4" stroke="#6c7f9f" stroke-width="0.6" stroke-linejoin="round"/>
<path d="M631.8 729.5L641.0 725.1L644.0 726.5L644.0 728.7L635.0 733.1L631.8 732.3Z" fill="#c9c5b4" stroke="#6c7f9f" stroke-width="0.6" stroke-linejoin="round"/>
<path d="M631.8 735.1L641.0 730.7L644.0 732.1L644.0 734.3L635.0 738.7L631.8 737.9Z" fill="#c9c5b4" stroke="#6c7f9f" stroke-width="0.6" stroke-linejoin="round"/>
<path d="M631.8 740.7L641.0 736.3L644.0 737.7L644.0 739.9L635.0 744.3L631.8 743.5Z" fill="#c9c5b4" stroke="#6c7f9f" stroke-width="0.6" stroke-linejoin="round"/>
<path d="M631.8 746.3L641.0 741.9L644.0 743.3L644.0 745.5L635.0 749.9L631.8 749.1Z" fill="#c9c5b4" stroke="#6c7f9f" stroke-width="0.6" stroke-linejoin="round"/>
<path d="M631.8 751.9L641.0 747.5L644.0 748.9L644.0 751.1L635.0 755.5L631.8 754.7Z" fill="#c9c5b4" stroke="#6c7f9f" stroke-width="0.6" stroke-linejoin="round"/>
<path d="M631.8 757.5L641.0 753.1L644.0 754.5L644.0 756.7L635.0 761.1L631.8 760.3Z" fill="#c9c5b4" stroke="#6c7f9f" stroke-width="0.6" stroke-linejoin="round"/>
<path d="M631.8 763.1L641.0 758.7L644.0 760.1L644.0 762.3L635.0 766.7L631.8 765.9Z" fill="#c9c5b4" stroke="#6c7f9f" stroke-width="0.6" stroke-linejoin="round"/>
<path d="M631.5 781.0L631.5 774.5L640.1 764.4L644.4 766.6L658.7 760.1L661.6 762.3L638.7 777.3Z" fill="#b0463c" stroke="#2a2152" stroke-width="0.9" stroke-linejoin="round"/>
<path d="M640.1 764.4L644.4 766.6L658.7 760.1" fill="none" stroke="#1d1d5e" stroke-width="1.2" stroke-linejoin="round" stroke-linecap="round"/>
<circle r="3.8" transform="matrix(0.866 0.5 0 1 599.3 812.8)" fill="none" stroke="#586a8e" stroke-width="0.7" vector-effect="non-scaling-stroke"/>
<circle r="17.5" transform="matrix(0.866 0.5 0 1 503.1 713.8)" fill="#a9bcda" stroke="#586a8e" stroke-width="0.7" vector-effect="non-scaling-stroke"/>
<path d="M489.0 700.0L497.0 696.0L510.0 731.0L502.0 735.5Z" fill="#a9bcda" stroke-linejoin="round"/>
<circle r="17.5" transform="matrix(0.866 0.5 0 1 495.3 718.3)" fill="#a6b9d9" stroke="#586a8e" stroke-width="0.7" vector-effect="non-scaling-stroke"/>
<circle r="7.7" transform="matrix(0.866 0.5 0 1 495.6 718.3)" fill="#a0b4d4" stroke="#586a8e" stroke-width="0.7" vector-effect="non-scaling-stroke"/>
<circle r="6.3" transform="matrix(0.866 0.5 0 1 496.3 718.1)" fill="#a6b9d9" stroke="#7b8eb2" stroke-width="0.5" vector-effect="non-scaling-stroke"/>
<circle r="18.8" transform="matrix(0.866 0.5 0 1 557.5 744.1)" fill="#a9bcda" stroke="#586a8e" stroke-width="0.7" vector-effect="non-scaling-stroke"/>
<circle r="18.8" transform="matrix(0.866 0.5 0 1 550.5 748.1)" fill="#a6b9d9" stroke="#586a8e" stroke-width="0.7" vector-effect="non-scaling-stroke"/>
<path d="M547.6 741.5L520.7 756.8L518.0 760.0L517.5 765.0L519.0 770.0L522.0 773.0L525.8 772.8L555.6 755.3L556.0 748.0Z" fill="#aabddb" stroke="#586a8e" stroke-width="0.6" stroke-linejoin="round"/>
<path d="M547.6 741.5L520.7 756.8L524.0 757.5L550.5 742.7Z" fill="#b6c8e4" stroke-linejoin="round"/>
<path d="M524.5 760.5L553.5 744.0" fill="none" stroke="#7d90b4" stroke-width="0.5" stroke-linejoin="round" stroke-linecap="round"/>
<ellipse cx="521.8" cy="764.8" rx="4.3" ry="8.2" transform="rotate(-12 521.8 764.8)" fill="#9fb2d2" stroke="#5f7399" stroke-width="0.6"/>
<path d="M527.0 772.5L556.0 755.5" fill="none" stroke="#7083a8" stroke-width="1.3" stroke-linejoin="round" stroke-linecap="round"/>
<path d="M501.1 765.5L504.0 758.2L507.0 759.7L506.0 766.0L508.4 778.6L511.3 775.7L531.6 770.6L541.8 764.0L545.4 765.5L545.4 782.9L554.9 787.3L554.9 797.1L522.9 801.5L511.3 801.5L501.1 797.4L496.1 790.2L496.1 778.6Z" fill="#a8bbda" stroke="#586a8e" stroke-width="0.6" stroke-linejoin="round"/>
<path d="M513.5 747.4L517.1 749.5L512.0 769.1L507.0 768.4Z" fill="#aec1de" stroke="#586a8e" stroke-width="0.6" stroke-linejoin="round"/>
<path d="M516.0 750.5L510.5 768.8" fill="none" stroke="#5f7399" stroke-width="0.7" stroke-linejoin="round" stroke-linecap="round"/>
<path d="M541.8 764.0L545.4 765.5L545.4 782.9L534.5 785.1Z" fill="#aec1de" stroke="#586a8e" stroke-width="0.6" stroke-linejoin="round"/>
<path d="M544.0 765.5L537.5 784.5" fill="none" stroke="#5f7399" stroke-width="0.7" stroke-linejoin="round" stroke-linecap="round"/>
<path d="M508.4 778.6L511.3 775.7L531.6 770.6L535.3 772.8L534.5 775.7L517.1 785.1L511.3 784.4Z" fill="#a2b6d6" stroke="#586a8e" stroke-width="0.6" stroke-linejoin="round"/>
<path d="M513.5 785.1L531.6 774.2L535.3 772.8L534.5 776.4L518.6 785.5Z" fill="#4a2a4c" stroke-linejoin="round"/>
<path d="M520.0 783.8L532.0 777.0L533.5 777.2L521.5 784.3Z" fill="#b0463c" stroke-linejoin="round"/>
<path d="M496.1 778.6L498.2 788.7L507.0 794.5L518.6 792.4L554.9 787.3" fill="none" stroke="#5f7399" stroke-width="0.7" stroke-linejoin="round" stroke-linecap="round"/>
<path d="M518.6 792.4L518.6 801.5" fill="none" stroke="#5f7399" stroke-width="0.7" stroke-linejoin="round" stroke-linecap="round"/>
<circle r="13.4" transform="matrix(0.866 0.5 0 1 454.1 644.4)" fill="#93a7c8" stroke="#5a6e96" stroke-width="0.7" vector-effect="non-scaling-stroke"/>
<circle r="13.2" transform="matrix(0.866 0.5 0 1 452.5 645)" fill="#a3b6d6" stroke="#5a6e96" stroke-width="0.7" vector-effect="non-scaling-stroke"/>
<path d="M448.5 632.5C456.5 634.5 461.5 642 461.8 650" fill="none" stroke="#c8d6ec" stroke-width="2.4" stroke-linecap="round" opacity="0.9"/>
<path d="M447.0 635.5C453.5 636.5 458.5 643 458.8 651.5" fill="none" stroke="#5a6e96" stroke-width="0.7"/>
<path d="M450.5 630.8C458.5 633 463.5 641 463.7 650" fill="none" stroke="#5a6e96" stroke-width="0.6"/>
<circle r="8.2" transform="matrix(0.866 0.5 0 1 449.3 647.2)" fill="#a0b4d4" stroke="#5a6e96" stroke-width="0.7" vector-effect="non-scaling-stroke"/>
<path d="M443.0 642.5L447.0 642L447.0 638L450.5 639.5L451.0 643.5L455.0 646.5L455.0 650.5L451.0 649.5L451.5 655.5L448.0 654L447.5 648.5L443.5 646.5Z" fill="#92a6c7" stroke="#5a6e96" stroke-width="0.7" stroke-linejoin="round"/>
<path d="M447.0 642L451.0 649.5M451.0 643.5L447.5 648.5M443.5 646.5L448.0 654M455.0 650.5L451.5 655.5" fill="none" stroke="#5a6e96" stroke-width="0.6"/>
<circle r="13.4" transform="matrix(0.866 0.5 0 1 453.90000000000003 722.0)" fill="#93a7c8" stroke="#5a6e96" stroke-width="0.7" vector-effect="non-scaling-stroke"/>
<circle r="13.2" transform="matrix(0.866 0.5 0 1 452.3 722.6)" fill="#a3b6d6" stroke="#5a6e96" stroke-width="0.7" vector-effect="non-scaling-stroke"/>
<path d="M448.3 710.1C456.3 712.1 461.3 719.6 461.6 727.6" fill="none" stroke="#c8d6ec" stroke-width="2.4" stroke-linecap="round" opacity="0.9"/>
<path d="M446.8 713.1C453.3 714.1 458.3 720.6 458.6 729.1" fill="none" stroke="#5a6e96" stroke-width="0.7"/>
<path d="M450.3 708.4C458.3 710.6 463.3 718.6 463.5 727.6" fill="none" stroke="#5a6e96" stroke-width="0.6"/>
<circle r="8.2" transform="matrix(0.866 0.5 0 1 449.1 724.8000000000001)" fill="#a0b4d4" stroke="#5a6e96" stroke-width="0.7" vector-effect="non-scaling-stroke"/>
<path d="M442.8 720.1L446.8 719.6L446.8 715.6L450.3 717.1L450.8 721.1L454.8 724.1L454.8 728.1L450.8 727.1L451.3 733.1L447.8 731.6L447.3 726.1L443.3 724.1Z" fill="#92a6c7" stroke="#5a6e96" stroke-width="0.7" stroke-linejoin="round"/>
<path d="M446.8 719.6L450.8 727.1M450.8 721.1L447.3 726.1M443.3 724.1L447.8 731.6M454.8 728.1L451.3 733.1" fill="none" stroke="#5a6e96" stroke-width="0.6"/>
<circle r="13.4" transform="matrix(0.866 0.5 0 1 601.0 718.3)" fill="#93a7c8" stroke="#5a6e96" stroke-width="0.7" vector-effect="non-scaling-stroke"/>
<circle r="13.2" transform="matrix(0.866 0.5 0 1 599.4 718.9)" fill="#a3b6d6" stroke="#5a6e96" stroke-width="0.7" vector-effect="non-scaling-stroke"/>
<path d="M595.4 706.4C603.4 708.4 608.4 715.9 608.6999999999999 723.9" fill="none" stroke="#c8d6ec" stroke-width="2.4" stroke-linecap="round" opacity="0.9"/>
<path d="M593.9 709.4C600.4 710.4 605.4 716.9 605.6999999999999 725.4" fill="none" stroke="#5a6e96" stroke-width="0.7"/>
<path d="M597.4 704.6999999999999C605.4 706.9 610.4 714.9 610.6 723.9" fill="none" stroke="#5a6e96" stroke-width="0.6"/>
<circle r="8.2" transform="matrix(0.866 0.5 0 1 596.1999999999999 721.1)" fill="#a0b4d4" stroke="#5a6e96" stroke-width="0.7" vector-effect="non-scaling-stroke"/>
<path d="M589.9 716.4L593.9 715.9L593.9 711.9L597.4 713.4L597.9 717.4L601.9 720.4L601.9 724.4L597.9 723.4L598.4 729.4L594.9 727.9L594.4 722.4L590.4 720.4Z" fill="#92a6c7" stroke="#5a6e96" stroke-width="0.7" stroke-linejoin="round"/>
<path d="M593.9 715.9L597.9 723.4M597.9 717.4L594.4 722.4M590.4 720.4L594.9 727.9M601.9 724.4L598.4 729.4" fill="none" stroke="#5a6e96" stroke-width="0.6"/>
<path d="M441.0 623.5L441.0 645.0" fill="none" stroke="#5f7399" stroke-width="0.7" stroke-linejoin="round" stroke-linecap="round"/>
<path d="M444.5 623.5L444.5 633.0" fill="none" stroke="#5f7399" stroke-width="0.7" stroke-linejoin="round" stroke-linecap="round"/>
<path d="M462.0 655.0L462.0 649.0" fill="none" stroke="#5f7399" stroke-width="0.7" stroke-linejoin="round" stroke-linecap="round"/>
</svg>
<div class="t" style="left:30px;top:10px;font-size:12px;line-height:12px;font-weight:normal;color:#7d7d86;transform:scaleX(1.0219);">Autodesk Fusion 360 (Education License)</div>
<div class="t" style="left:466.3px;top:43px;font-size:13px;line-height:13px;font-weight:normal;color:#30303c;transform:scaleX(0.9234);">walking robot  tutor v3*</div>
<div class="t" style="left:43.2px;top:99px;font-size:11px;line-height:11px;font-weight:bold;color:#3a3a3a;transform:scaleX(0.9055);">DESIGN</div>
<div class="t" style="left:151.5px;top:69px;font-size:11px;line-height:11px;font-weight:normal;color:#1b9be0;transform:scaleX(0.8996);">SOLID</div>
<div class="t" style="left:229.3px;top:69px;font-size:11px;line-height:11px;font-weight:normal;color:#3a3a40;transform:scaleX(0.8890);">SURFACE</div>
<div class="t" style="left:322.4px;top:69px;font-size:11px;line-height:11px;font-weight:normal;color:#3a3a40;transform:scaleX(0.8900);">SHEET METAL</div>
<div class="t" style="left:435.4px;top:69px;font-size:11px;line-height:11px;font-weight:normal;color:#3a3a40;transform:scaleX(0.9247);">TOOLS</div>
<div class="t" style="left:150.3px;top:130px;font-size:11px;line-height:11px;font-weight:normal;color:#3a3a40;transform:scaleX(0.8833);">CREATE</div>
<div class="t" style="left:332.5px;top:130px;font-size:11px;line-height:11px;font-weight:normal;color:#3a3a40;transform:scaleX(0.8859);">MODIFY</div>
<div class="t" style="left:508.3px;top:130px;font-size:11px;line-height:11px;font-weight:normal;color:#3a3a40;transform:scaleX(0.9222);">ASSEMBLE</div>
<div class="t" style="left:603.6px;top:130px;font-size:11px;line-height:11px;font-weight:normal;color:#3a3a40;transform:scaleX(0.8862);">CONSTRUCT</div>
<div class="t" style="left:702px;top:130px;font-size:11px;line-height:11px;font-weight:normal;color:#3a3a40;transform:scaleX(0.8556);">INSPECT</div>
<div class="t" style="left:814px;top:130px;font-size:11px;line-height:11px;font-weight:normal;color:#3a3a40;transform:scaleX(0.8819);">INSERT</div>
<div class="t" style="left:921.3px;top:130px;font-size:11px;line-height:11px;font-weight:normal;color:#3a3a40;transform:scaleX(0.8809);">SELECT</div>
<div class="t" style="left:30.5px;top:156px;font-size:11px;line-height:11px;font-weight:normal;color:#66666c;transform:scaleX(0.9060);">BROWSER</div>
<div class="t" style="left:100px;top:184px;font-size:11px;line-height:11px;font-weight:normal;color:#36363e;">walking robot  tutor v3</div>
<div class="t" style="left:92.2px;top:208px;font-size:11px;line-height:11px;font-weight:normal;color:#36363e;transform:scaleX(0.9835);">Document Settings</div>
<div class="t" style="left:92px;top:232px;font-size:11px;line-height:11px;font-weight:normal;color:#36363e;">Named Views</div>
<div class="t" style="left:117.4px;top:256px;font-size:11px;line-height:11px;font-weight:normal;color:#36363e;transform:scaleX(0.9304);">Origin</div>
<div class="t" style="left:117.4px;top:280px;font-size:11px;line-height:11px;font-weight:normal;color:#36363e;transform:scaleX(0.9496);">Joints</div>
<div class="t" style="left:117.3px;top:304px;font-size:11px;line-height:11px;font-weight:normal;color:#36363e;transform:scaleX(0.9718);">base:1</div>
<div class="t" style="left:135.2px;top:328px;font-size:11px;line-height:11px;font-weight:normal;color:#36363e;transform:scaleX(0.9406);">Origin</div>
<div class="t" style="left:135.2px;top:352px;font-size:11px;line-height:11px;font-weight:normal;color:#36363e;transform:scaleX(0.9691);">Bodies</div>
<div class="t" style="left:135.2px;top:376px;font-size:11px;line-height:11px;font-weight:normal;color:#36363e;transform:scaleX(0.9856);">Sketches</div>
<div class="t" style="left:142.8px;top:400px;font-size:11px;line-height:11px;font-weight:bold;color:#ffffff;transform:scaleX(0.9549);">70093 v55 v3:1</div>
<div class="t" style="left:30px;top:975px;font-size:11px;line-height:11px;font-weight:normal;color:#55555c;transform:scaleX(0.8804);">COMMENTS</div>
<div class="t" style="left:1009.7px;top:976px;font-size:11px;line-height:11px;font-weight:bold;color:#33333a;transform:scaleX(0.9795);">70093 v55 v3:1</div>
<div class="t" style="left:1071px;top:41px;font-size:12px;line-height:12px;font-weight:normal;color:#3a3a44;transform:scaleX(0.9124);">CL</div>
</div>
</body></html>
